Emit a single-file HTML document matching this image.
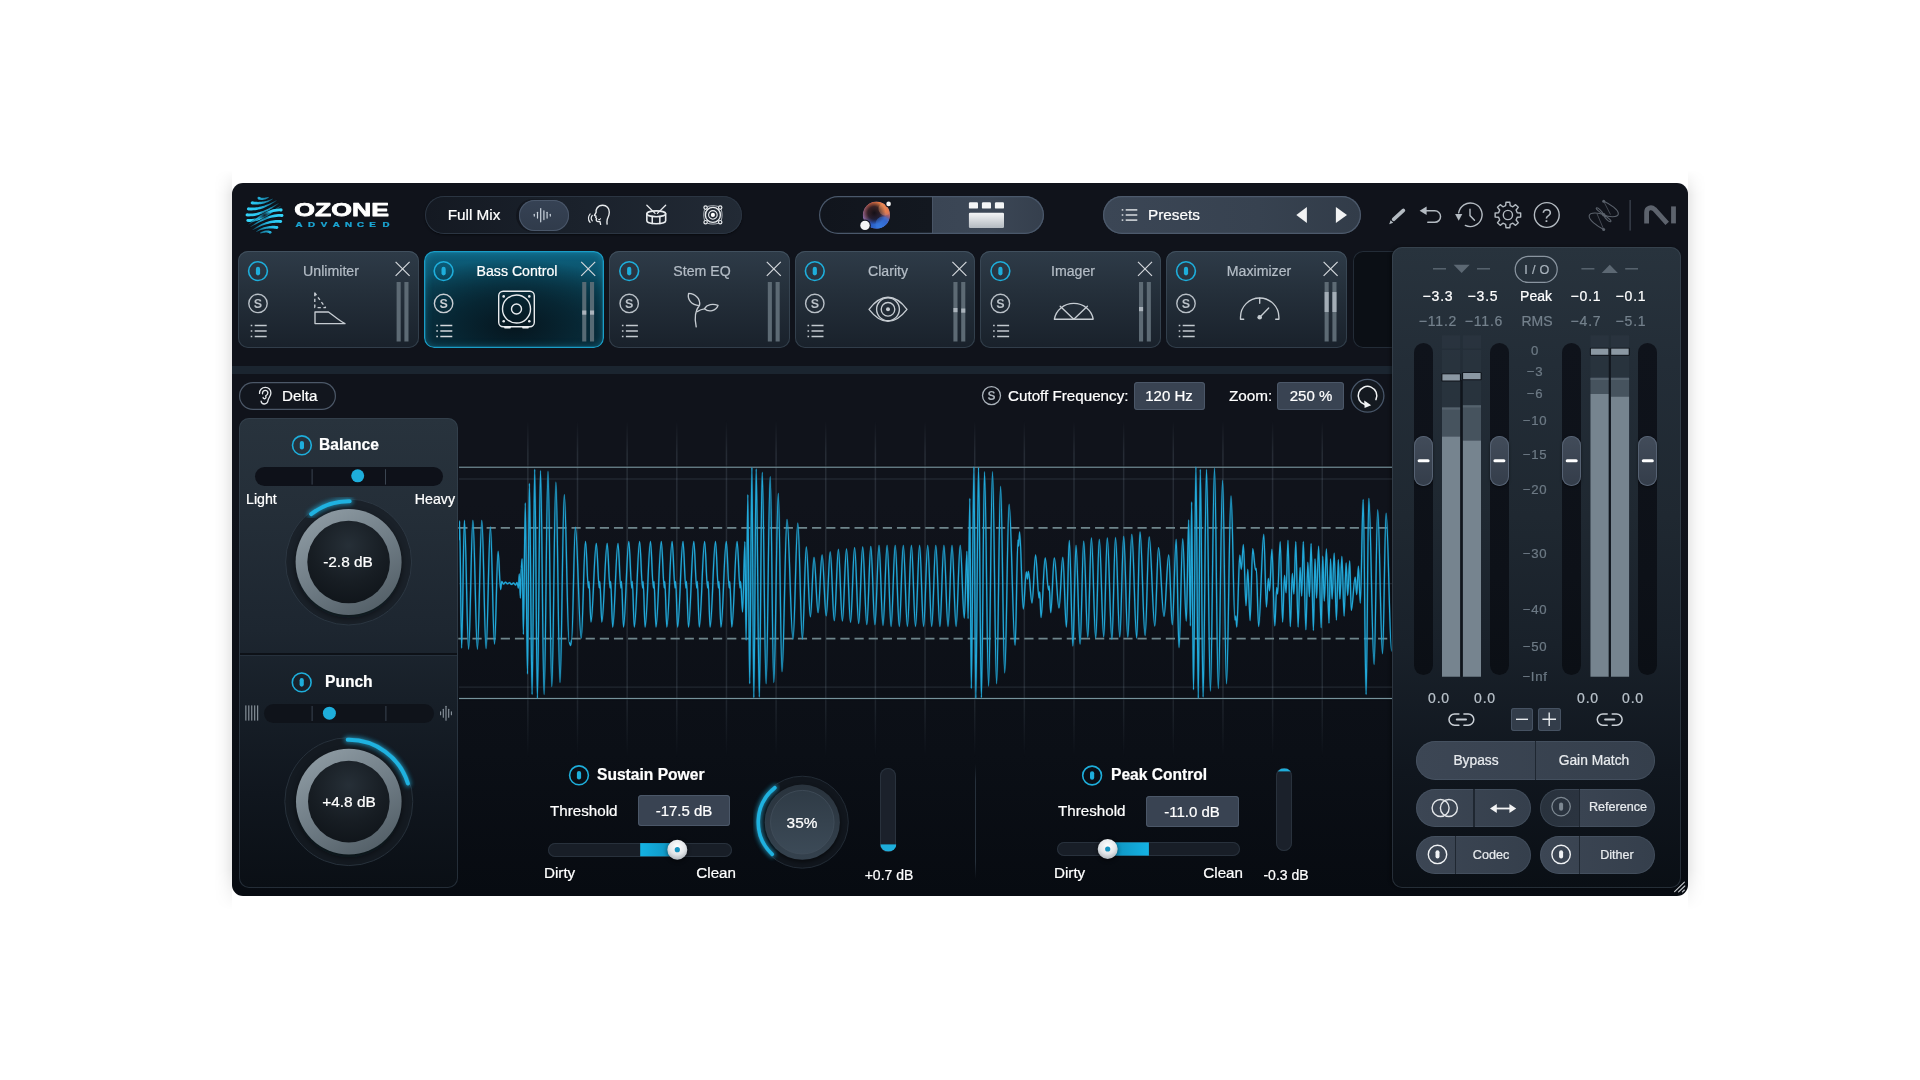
<!DOCTYPE html>
<html lang="en"><head><meta charset="utf-8"><title>Ozone Advanced - Bass Control</title>
<style>
html,body{margin:0;padding:0;background:#fff;}
body{width:1920px;height:1080px;position:relative;overflow:hidden;font-family:"Liberation Sans",Arial,sans-serif;}
.a{position:absolute;box-sizing:border-box;}
.t{-webkit-text-stroke:0.22px;will-change:transform;position:absolute;white-space:nowrap;line-height:1;}
svg.ov{opacity:.999;position:absolute;left:0;top:0;width:1920px;height:1080px;font-family:"Liberation Sans",Arial,sans-serif;}

</style></head><body>
<div class="a win" style="left:232px;top:183px;width:1456px;height:713px;background:linear-gradient(to bottom,#10131b 0%,#10131b 45%,#0b0f16 80%,#070b11 100%);border-radius:11px;"></div>
<div class="a " style="left:214px;top:170px;width:18px;height:740px;background:linear-gradient(to right,rgba(0,0,0,0) 0%,rgba(0,0,0,0.025) 50%,rgba(0,0,0,0.085) 100%);-webkit-mask-image:linear-gradient(to bottom,transparent 0,#000 25px,#000 700px,transparent 740px);"></div>
<div class="a " style="left:1688px;top:170px;width:18px;height:740px;background:linear-gradient(to left,rgba(0,0,0,0) 0%,rgba(0,0,0,0.025) 50%,rgba(0,0,0,0.085) 100%);-webkit-mask-image:linear-gradient(to bottom,transparent 0,#000 25px,#000 700px,transparent 740px);"></div>
<div class="a " style="left:425px;top:196px;width:317px;height:38px;border-radius:19px;background:linear-gradient(to right,#141922 0%,#1a212b 45%,#222a35 100%);box-shadow:inset 0 0 0 1px #2b3542, 0 1px 2px rgba(0,0,0,.5);"></div>
<div class="a " style="left:515.5px;top:198.5px;width:40px;height:33px;border-radius:17px 0 0 17px;background:linear-gradient(to right,#11151d,rgba(17,21,29,0));"></div>
<div class="a " style="left:518.5px;top:200px;width:50px;height:31px;border-radius:16px;background:linear-gradient(to bottom,#364254,#303b4b);box-shadow:inset 0 0 0 1px #4a576a;"></div>
<div class="a " style="left:819px;top:195.8px;width:225.2px;height:38.4px;border-radius:19.2px;background:linear-gradient(to right,#11151d 0,#131820 50.3%,#3a4554 50.3%,#3c4756 75%,#353f4d 100%);box-shadow:inset 0 0 0 1.2px #4a586b;"></div>
<div class="a " style="left:932px;top:197px;width:1.4px;height:36px;background:#55637680;"></div>
<div class="a " style="left:1103px;top:196px;width:258.2px;height:38.4px;border-radius:19.2px;background:linear-gradient(to right,#3b4655 0,#374250 60%,#323c49 100%);box-shadow:inset 0 0 0 1.2px #4d5a6c;"></div>
<div class="a " style="left:238.0px;top:251px;width:180.6px;height:97px;border-radius:10px;background:linear-gradient(to bottom,#2e3b48 0%,#25303b 40%,#19212b 100%);box-shadow:inset 0 0 0 1px rgba(70,85,100,.55), inset 0 1px 0 rgba(90,105,120,.35);"></div>
<div class="a " style="left:423.6px;top:251px;width:180.6px;height:97px;border-radius:10px;background:radial-gradient(ellipse 75% 70% at 50% 78%,#06161f 0%,#072633 45%,rgba(8,52,70,0) 100%),linear-gradient(to bottom,#0d6381 0%,#0a475c 38%,#082f3e 100%);box-shadow:inset 0 0 0 1.3px #1a9dc6, inset 0 0 9px rgba(40,180,225,.45);"></div>
<div class="a " style="left:609.2px;top:251px;width:180.6px;height:97px;border-radius:10px;background:linear-gradient(to bottom,#2e3b48 0%,#25303b 40%,#19212b 100%);box-shadow:inset 0 0 0 1px rgba(70,85,100,.55), inset 0 1px 0 rgba(90,105,120,.35);"></div>
<div class="a " style="left:794.8px;top:251px;width:180.6px;height:97px;border-radius:10px;background:linear-gradient(to bottom,#2e3b48 0%,#25303b 40%,#19212b 100%);box-shadow:inset 0 0 0 1px rgba(70,85,100,.55), inset 0 1px 0 rgba(90,105,120,.35);"></div>
<div class="a " style="left:980.4px;top:251px;width:180.6px;height:97px;border-radius:10px;background:linear-gradient(to bottom,#2e3b48 0%,#25303b 40%,#19212b 100%);box-shadow:inset 0 0 0 1px rgba(70,85,100,.55), inset 0 1px 0 rgba(90,105,120,.35);"></div>
<div class="a " style="left:1166.0px;top:251px;width:180.6px;height:97px;border-radius:10px;background:linear-gradient(to bottom,#2e3b48 0%,#25303b 40%,#19212b 100%);box-shadow:inset 0 0 0 1px rgba(70,85,100,.55), inset 0 1px 0 rgba(90,105,120,.35);"></div>
<div class="a " style="left:1352.5px;top:251px;width:60px;height:97px;border-radius:10px;background:#0b0f15;box-shadow:inset 0 0 0 1px #232c37;"></div>
<div class="a " style="left:232px;top:366px;width:1160px;height:7.5px;background:#1b2530;"></div>
<div class="a " style="left:239.2px;top:381.7px;width:96.7px;height:28.1px;border-radius:14px;background:#12161e;box-shadow:inset 0 0 0 1.2px #4c5868;"></div>
<div class="a " style="left:239.3px;top:417.6px;width:219px;height:470px;border-radius:10px;background:linear-gradient(to bottom,#28333d 0%,#242e38 20%,#1d2630 45%,#171f28 60%,#10161e 80%,#0a0f15 100%);box-shadow:inset 0 0 0 1px rgba(62,76,90,.5);"></div>
<div class="a " style="left:240.3px;top:652.6px;width:217px;height:2.2px;background:#0d1117;"></div>
<div class="a " style="left:240.3px;top:654.8px;width:217px;height:1px;background:rgba(60,74,88,.35);"></div>
<div class="a " style="left:254.9px;top:466.6px;width:188.2px;height:19.3px;border-radius:9.7px;background:#0e1119;"></div>
<div class="a " style="left:264px;top:703.8px;width:170px;height:19px;border-radius:9.5px;background:#0f131a;"></div>
<div class="a " style="left:1134px;top:382px;width:70.7px;height:27.6px;border-radius:3.5px;background:#394352;box-shadow:inset 0 0 0 1px #4b5768;"></div>
<div class="a " style="left:1277px;top:382px;width:67.2px;height:27.6px;border-radius:3.5px;background:#394352;box-shadow:inset 0 0 0 1px #4b5768;"></div>
<div class="a " style="left:637.8px;top:794.6px;width:92.7px;height:31.6px;border-radius:3.5px;background:#394352;box-shadow:inset 0 0 0 1px #4b5768;"></div>
<div class="a " style="left:547.9px;top:842.5px;width:184.5px;height:14.4px;border-radius:7.2px;background:#181e27;box-shadow:inset 0 0 0 1px #28313c;"></div>
<div class="a " style="left:880.2px;top:768.3px;width:16.3px;height:83.30000000000007px;border-radius:8.1px;background:#1b212b;box-shadow:inset 0 0 0 1px #29323d;overflow:hidden;"></div>
<div class="a " style="left:974.6px;top:764px;width:1.3px;height:115px;background:linear-gradient(to bottom,rgba(38,48,59,0),#26303b 15%,#26303b 85%,rgba(38,48,59,0));"></div>
<div class="a " style="left:1145.6px;top:795.6px;width:93.2px;height:31.8px;border-radius:3.5px;background:#394352;box-shadow:inset 0 0 0 1px #4b5768;"></div>
<div class="a " style="left:1056.9px;top:841.8px;width:183.29999999999995px;height:14.4px;border-radius:7.2px;background:#181e27;box-shadow:inset 0 0 0 1px #28313c;"></div>
<div class="a " style="left:1276.1px;top:768.3px;width:16.3px;height:82.5px;border-radius:8.1px;background:#1b212b;box-shadow:inset 0 0 0 1px #29323d;overflow:hidden;"></div>
<div class="a " style="left:1392px;top:247.3px;width:289px;height:640.5px;border-radius:10px;background:linear-gradient(to bottom,#28333d 0%,#232d37 18%,#1f2831 42%,#19212a 62%,#10161e 82%,#0a0f15 100%);box-shadow:inset 0 0 0 1px rgba(70,84,98,.45), -2px 0 3px rgba(0,0,0,.35);"></div>
<div class="a " style="left:1414.2px;top:343px;width:18.8px;height:332.4px;border-radius:9.4px;background:linear-gradient(to bottom,#0f131b,#0d1118 70%,#0b0f15);"></div>
<div class="a " style="left:1490px;top:343px;width:18.8px;height:332.4px;border-radius:9.4px;background:linear-gradient(to bottom,#0f131b,#0d1118 70%,#0b0f15);"></div>
<div class="a " style="left:1562.3px;top:343px;width:18.8px;height:332.4px;border-radius:9.4px;background:linear-gradient(to bottom,#0f131b,#0d1118 70%,#0b0f15);"></div>
<div class="a " style="left:1638.4px;top:343px;width:18.8px;height:332.4px;border-radius:9.4px;background:linear-gradient(to bottom,#0f131b,#0d1118 70%,#0b0f15);"></div>
<div class="a " style="left:1414.2px;top:435.5px;width:18.8px;height:50.2px;border-radius:9.4px;background:linear-gradient(to bottom,#424c5a,#343d4a);box-shadow:inset 0 0 0 1px #566273, 0 1px 3px rgba(0,0,0,.5);"></div>
<div class="a " style="left:1490px;top:435.5px;width:18.8px;height:50.2px;border-radius:9.4px;background:linear-gradient(to bottom,#424c5a,#343d4a);box-shadow:inset 0 0 0 1px #566273, 0 1px 3px rgba(0,0,0,.5);"></div>
<div class="a " style="left:1562.3px;top:435.5px;width:18.8px;height:50.2px;border-radius:9.4px;background:linear-gradient(to bottom,#424c5a,#343d4a);box-shadow:inset 0 0 0 1px #566273, 0 1px 3px rgba(0,0,0,.5);"></div>
<div class="a " style="left:1638.4px;top:435.5px;width:18.8px;height:50.2px;border-radius:9.4px;background:linear-gradient(to bottom,#424c5a,#343d4a);box-shadow:inset 0 0 0 1px #566273, 0 1px 3px rgba(0,0,0,.5);"></div>
<div class="a " style="left:1510.6px;top:707.8px;width:22.8px;height:23px;border-radius:3px;background:#333d4a;box-shadow:inset 0 0 0 1px #465262;"></div>
<div class="a " style="left:1537.8px;top:707.8px;width:22.8px;height:23px;border-radius:3px;background:#333d4a;box-shadow:inset 0 0 0 1px #465262;"></div>
<div class="a " style="left:1416px;top:741.4px;width:239px;height:38.6px;border-radius:19.3px;background:linear-gradient(to right,#3c4654,#353f4c);box-shadow:inset 0 0 0 1px rgba(90,104,120,.35);"></div>
<div class="a " style="left:1534.8px;top:741.4px;width:1.6px;height:38.6px;background:#1f2731;"></div>
<div class="a " style="left:1416px;top:788.6px;width:115.4px;height:38.6px;border-radius:19.3px;background:linear-gradient(to right,#3c4654,#353f4c);box-shadow:inset 0 0 0 1px rgba(90,104,120,.35);"></div>
<div class="a " style="left:1473.2px;top:788.6px;width:1.6px;height:38.6px;background:#1f2731;"></div>
<div class="a " style="left:1540.3px;top:788.6px;width:114.7px;height:38.6px;border-radius:19.3px;background:linear-gradient(to right,#29323d 0,#2b3440 33.8%,#3a4452 33.8%,#353f4c 100%);box-shadow:inset 0 0 0 1px rgba(90,104,120,.35);"></div>
<div class="a " style="left:1578.5px;top:788.6px;width:1.6px;height:38.6px;background:#1f2731;"></div>
<div class="a " style="left:1416px;top:835.5px;width:115.4px;height:38.5px;border-radius:19.3px;background:linear-gradient(to right,#3c4654,#353f4c);box-shadow:inset 0 0 0 1px rgba(90,104,120,.35);"></div>
<div class="a " style="left:1454.8px;top:835.5px;width:1.6px;height:38.5px;background:#1f2731;"></div>
<div class="a " style="left:1540.3px;top:835.5px;width:114.7px;height:38.5px;border-radius:19.3px;background:linear-gradient(to right,#3c4654,#353f4c);box-shadow:inset 0 0 0 1px rgba(90,104,120,.35);"></div>
<div class="a " style="left:1578.5px;top:835.5px;width:1.6px;height:38.5px;background:#1f2731;"></div>
<svg class="ov" viewBox="0 0 1920 1080">
<defs><linearGradient id="lgA" gradientUnits="userSpaceOnUse" x1="-17" y1="4" x2="15" y2="-15"><stop offset="0" stop-color="#35d6fa"/><stop offset="0.42" stop-color="#27c0ec"/><stop offset="0.7" stop-color="#1fa8d3" stop-opacity="0.8"/><stop offset="1" stop-color="#1d9fc9" stop-opacity="0.15"/></linearGradient><linearGradient id="lgB" gradientUnits="userSpaceOnUse" x1="17" y1="-4" x2="-15" y2="15"><stop offset="0" stop-color="#35d6fa"/><stop offset="0.42" stop-color="#27c0ec"/><stop offset="0.7" stop-color="#1fa8d3" stop-opacity="0.8"/><stop offset="1" stop-color="#1d9fc9" stop-opacity="0.15"/></linearGradient><radialGradient id="lgf" cx="0.5" cy="0.5" r="0.5"><stop offset="0" stop-color="#10131b" stop-opacity="0.9"/><stop offset="0.5" stop-color="#10131b" stop-opacity="0.45"/><stop offset="1" stop-color="#10131b" stop-opacity="0"/></radialGradient></defs>
<g transform="translate(264.5,215.2)"><g fill="url(#lgA)" stroke="#04060a" stroke-width="0.45" stroke-opacity="0.8" paint-order="stroke"><path d="M-6.34,-15.92 L-5.65,-15.68 L-4.97,-15.49 L-4.30,-15.37 L-3.63,-15.29 L-2.97,-15.26 L-2.33,-15.27 L-1.70,-15.32 L-1.08,-15.40 L-0.47,-15.52 L0.12,-15.66 L0.70,-15.82 L1.27,-16.01 L1.82,-16.21 L2.36,-16.42 L2.89,-16.65 L3.41,-16.88 L3.92,-17.12 L4.42,-17.36 L3.98,-18.44 L3.47,-18.28 L2.95,-18.13 L2.42,-17.98 L1.89,-17.84 L1.36,-17.71 L0.83,-17.60 L0.30,-17.50 L-0.22,-17.43 L-0.75,-17.38 L-1.27,-17.36 L-1.79,-17.36 L-2.30,-17.39 L-2.81,-17.45 L-3.31,-17.55 L-3.80,-17.68 L-4.29,-17.84 L-4.78,-18.04 L-5.26,-18.28Z"/><circle cx="-5.60" cy="-17.10" r="1.42" stroke="none"/><path d="M-12.77,-10.86 L-11.46,-10.74 L-10.16,-10.67 L-8.88,-10.64 L-7.62,-10.66 L-6.37,-10.73 L-5.13,-10.84 L-3.91,-11.01 L-2.71,-11.22 L-1.52,-11.49 L-0.35,-11.80 L0.81,-12.16 L1.95,-12.58 L3.08,-13.05 L4.19,-13.57 L5.29,-14.14 L6.37,-14.77 L7.44,-15.45 L8.50,-16.18 L8.10,-16.82 L6.98,-16.25 L5.86,-15.74 L4.75,-15.29 L3.64,-14.88 L2.53,-14.53 L1.42,-14.23 L0.31,-13.97 L-0.80,-13.76 L-1.92,-13.59 L-3.04,-13.46 L-4.17,-13.37 L-5.31,-13.33 L-6.46,-13.31 L-7.62,-13.34 L-8.80,-13.39 L-9.99,-13.48 L-11.20,-13.60 L-12.43,-13.74Z"/><circle cx="-12.40" cy="-12.30" r="1.42" stroke="none"/><path d="M-16.52,-4.86 L-14.69,-4.76 L-12.89,-4.76 L-11.13,-4.85 L-9.40,-5.03 L-7.70,-5.28 L-6.04,-5.62 L-4.40,-6.03 L-2.79,-6.52 L-1.21,-7.07 L0.34,-7.68 L1.88,-8.35 L3.40,-9.08 L4.90,-9.87 L6.39,-10.70 L7.88,-11.58 L9.35,-12.51 L10.83,-13.47 L12.30,-14.48 L11.90,-15.12 L10.35,-14.27 L8.80,-13.46 L7.27,-12.69 L5.74,-11.97 L4.21,-11.29 L2.69,-10.66 L1.17,-10.09 L-0.35,-9.57 L-1.88,-9.10 L-3.42,-8.69 L-4.96,-8.35 L-6.51,-8.06 L-8.08,-7.84 L-9.67,-7.69 L-11.28,-7.60 L-12.92,-7.58 L-14.58,-7.63 L-16.28,-7.74Z"/><circle cx="-16.20" cy="-6.30" r="1.42" stroke="none"/><path d="M-17.81,1.15 L-15.71,1.22 L-13.67,1.16 L-11.67,0.98 L-9.73,0.68 L-7.83,0.27 L-5.98,-0.24 L-4.17,-0.85 L-2.39,-1.54 L-0.65,-2.30 L1.07,-3.13 L2.76,-4.03 L4.44,-4.98 L6.10,-5.98 L7.76,-7.02 L9.41,-8.10 L11.06,-9.20 L12.73,-10.33 L14.40,-11.48 L14.00,-12.12 L12.23,-11.12 L10.49,-10.14 L8.75,-9.18 L7.04,-8.25 L5.33,-7.36 L3.62,-6.51 L1.92,-5.70 L0.22,-4.96 L-1.48,-4.27 L-3.19,-3.65 L-4.91,-3.11 L-6.64,-2.64 L-8.39,-2.26 L-10.16,-1.96 L-11.96,-1.76 L-13.80,-1.65 L-15.67,-1.65 L-17.59,-1.75Z"/><circle cx="-17.50" cy="-0.30" r="1.42" stroke="none"/><path d="M-17.00,6.65 L-14.75,6.70 L-12.57,6.57 L-10.46,6.28 L-8.42,5.83 L-6.44,5.25 L-4.52,4.54 L-2.66,3.73 L-0.84,2.81 L0.95,1.82 L2.70,0.75 L4.42,-0.37 L6.13,-1.54 L7.84,-2.75 L9.54,-3.99 L11.25,-5.24 L12.98,-6.49 L14.72,-7.74 L16.50,-8.98 L16.10,-9.62 L14.22,-8.53 L12.37,-7.41 L10.54,-6.29 L8.74,-5.17 L6.96,-4.07 L5.19,-3.00 L3.43,-1.96 L1.68,-0.98 L-0.08,-0.06 L-1.84,0.78 L-3.61,1.55 L-5.40,2.21 L-7.20,2.78 L-9.03,3.23 L-10.90,3.56 L-12.81,3.76 L-14.77,3.83 L-16.80,3.75Z"/><circle cx="-16.70" cy="5.20" r="1.42" stroke="none"/></g><g fill="url(#lgB)" stroke="#04060a" stroke-width="0.45" stroke-opacity="0.8" paint-order="stroke"><path d="M6.34,15.92 L5.65,15.68 L4.97,15.49 L4.30,15.37 L3.63,15.29 L2.97,15.26 L2.33,15.27 L1.70,15.32 L1.08,15.40 L0.47,15.52 L-0.12,15.66 L-0.70,15.82 L-1.27,16.01 L-1.82,16.21 L-2.36,16.42 L-2.89,16.65 L-3.41,16.88 L-3.92,17.12 L-4.42,17.36 L-3.98,18.44 L-3.47,18.28 L-2.95,18.13 L-2.42,17.98 L-1.89,17.84 L-1.36,17.71 L-0.83,17.60 L-0.30,17.50 L0.22,17.43 L0.75,17.38 L1.27,17.36 L1.79,17.36 L2.30,17.39 L2.81,17.45 L3.31,17.55 L3.80,17.68 L4.29,17.84 L4.78,18.04 L5.26,18.28Z"/><circle cx="5.60" cy="17.10" r="1.42" stroke="none"/><path d="M12.77,10.86 L11.46,10.74 L10.16,10.67 L8.88,10.64 L7.62,10.66 L6.37,10.73 L5.13,10.84 L3.91,11.01 L2.71,11.22 L1.52,11.49 L0.35,11.80 L-0.81,12.16 L-1.95,12.58 L-3.08,13.05 L-4.19,13.57 L-5.29,14.14 L-6.37,14.77 L-7.44,15.45 L-8.50,16.18 L-8.10,16.82 L-6.98,16.25 L-5.86,15.74 L-4.75,15.29 L-3.64,14.88 L-2.53,14.53 L-1.42,14.23 L-0.31,13.97 L0.80,13.76 L1.92,13.59 L3.04,13.46 L4.17,13.37 L5.31,13.33 L6.46,13.31 L7.62,13.34 L8.80,13.39 L9.99,13.48 L11.20,13.60 L12.43,13.74Z"/><circle cx="12.40" cy="12.30" r="1.42" stroke="none"/><path d="M16.52,4.86 L14.69,4.76 L12.89,4.76 L11.13,4.85 L9.40,5.03 L7.70,5.28 L6.04,5.62 L4.40,6.03 L2.79,6.52 L1.21,7.07 L-0.34,7.68 L-1.88,8.35 L-3.40,9.08 L-4.90,9.87 L-6.39,10.70 L-7.88,11.58 L-9.35,12.51 L-10.83,13.47 L-12.30,14.48 L-11.90,15.12 L-10.35,14.27 L-8.80,13.46 L-7.27,12.69 L-5.74,11.97 L-4.21,11.29 L-2.69,10.66 L-1.17,10.09 L0.35,9.57 L1.88,9.10 L3.42,8.69 L4.96,8.35 L6.51,8.06 L8.08,7.84 L9.67,7.69 L11.28,7.60 L12.92,7.58 L14.58,7.63 L16.28,7.74Z"/><circle cx="16.20" cy="6.30" r="1.42" stroke="none"/><path d="M17.81,-1.15 L15.71,-1.22 L13.67,-1.16 L11.67,-0.98 L9.73,-0.68 L7.83,-0.27 L5.98,0.24 L4.17,0.85 L2.39,1.54 L0.65,2.30 L-1.07,3.13 L-2.76,4.03 L-4.44,4.98 L-6.10,5.98 L-7.76,7.02 L-9.41,8.10 L-11.06,9.20 L-12.73,10.33 L-14.40,11.48 L-14.00,12.12 L-12.23,11.12 L-10.49,10.14 L-8.75,9.18 L-7.04,8.25 L-5.33,7.36 L-3.62,6.51 L-1.92,5.70 L-0.22,4.96 L1.48,4.27 L3.19,3.65 L4.91,3.11 L6.64,2.64 L8.39,2.26 L10.16,1.96 L11.96,1.76 L13.80,1.65 L15.67,1.65 L17.59,1.75Z"/><circle cx="17.50" cy="0.30" r="1.42" stroke="none"/><path d="M17.00,-6.65 L14.75,-6.70 L12.57,-6.57 L10.46,-6.28 L8.42,-5.83 L6.44,-5.25 L4.52,-4.54 L2.66,-3.73 L0.84,-2.81 L-0.95,-1.82 L-2.70,-0.75 L-4.42,0.37 L-6.13,1.54 L-7.84,2.75 L-9.54,3.99 L-11.25,5.24 L-12.98,6.49 L-14.72,7.74 L-16.50,8.98 L-16.10,9.62 L-14.22,8.53 L-12.37,7.41 L-10.54,6.29 L-8.74,5.17 L-6.96,4.07 L-5.19,3.00 L-3.43,1.96 L-1.68,0.98 L0.08,0.06 L1.84,-0.78 L3.61,-1.55 L5.40,-2.21 L7.20,-2.78 L9.03,-3.23 L10.90,-3.56 L12.81,-3.76 L14.77,-3.83 L16.80,-3.75Z"/><circle cx="16.70" cy="-5.20" r="1.42" stroke="none"/></g><ellipse cx="0" cy="0" rx="6.5" ry="5" transform="rotate(-30)" fill="url(#lgf)"/></g>
<text x="294.3" y="216.3" font-size="18.4" font-weight="700" fill="#fff" stroke="#fff" stroke-width="0.75" stroke-linejoin="round" textLength="94.6" lengthAdjust="spacingAndGlyphs">OZONE</text>
<text transform="scale(1.55,1)" x="190.69 198.69 206.93 214.69 222.63 230.31 238.22 246.76" y="227" font-size="6.3" font-weight="700" fill="#1ba8d6" stroke="#1ba8d6" stroke-width="0.25">ADVANCED</text>
<rect x="533.70" y="213.70" width="1.2" height="3" rx="0.6" fill="#c9d2dc"/>
<rect x="536.90" y="211.70" width="1.2" height="7" rx="0.6" fill="#c9d2dc"/>
<rect x="540.10" y="207.95" width="1.2" height="14.5" rx="0.6" fill="#c9d2dc"/>
<rect x="543.30" y="210.20" width="1.2" height="10" rx="0.6" fill="#c9d2dc"/>
<rect x="546.50" y="211.70" width="1.2" height="7" rx="0.6" fill="#c9d2dc"/>
<rect x="549.70" y="213.70" width="1.2" height="3" rx="0.6" fill="#c9d2dc"/>
<g transform="translate(599.3,215.4)" fill="none" stroke="#e9ecef" stroke-width="1.35" stroke-linecap="round" stroke-linejoin="round"><path d="M1.3,9 L0.6,6 C-1.4,6.5 -3,6 -3.1,4.6 L-2.7,3 L-3.6,2.2 L-3.3,0.7 L-4.9,-0.1 L-3.2,-3 C-3.4,-4.6 -3.2,-6 -2.2,-7.4 C-0.8,-9.4 1.4,-10.1 3.4,-10.1 C7.4,-10.1 10,-7 10,-3.2 C10,0.4 8.3,2.2 7.9,4.2 C7.6,5.8 7.6,7.4 7.8,8.7"/><path d="M-0.6,4.2 C0.2,4.4 0.8,4 1.2,3.4" stroke-width="1.1"/><path d="M-7,0 C-8.3,1.7 -8.3,3.9 -7,5.5" stroke-width="1.2"/><path d="M-9.2,-1.4 C-11.2,1.2 -11.2,4.6 -9.2,7" stroke-width="1.2"/></g>
<g transform="translate(656.25,215)" fill="none" stroke="#e9ecef" stroke-width="1.6" stroke-linecap="round" stroke-linejoin="round"><ellipse cx="0" cy="-1.2" rx="9.4" ry="2.9"/><path d="M-9.4,-1.2 V5.8 C-9.4,7.6 -5,8.8 0,8.8 S9.4,7.6 9.4,5.8 V-1.2"/><path d="M-4,1.6 V8.4 M3.6,1.6 V8.4" stroke-width="1.5"/><path d="M-9.4,-9.8 L-1.2,-1.6 M9.4,-9.8 L1.2,-1.6" stroke-width="1.3"/></g>
<g transform="translate(712.9,214.9)" fill="none" stroke="#e9ecef" stroke-width="1.4" stroke-linejoin="round"><circle r="7.5"/><circle r="4.3" stroke-width="1.1"/><circle r="2.1" fill="#fff" stroke="none"/><path d="M-5.4,-8.4 C-2,-9.4 2,-9.4 5.4,-8.4 M-5.4,8.4 C-2,9.4 2,9.4 5.4,8.4 M-8.4,-5.4 C-9.4,-2 -9.4,2 -8.4,5.4 M8.4,-5.4 C9.4,-2 9.4,2 8.4,5.4" stroke-width="0.9" opacity="0.8"/><circle cx="-7.3" cy="-7.3" r="1.7" stroke-width="1.2"/><circle cx="7.3" cy="-7.3" r="1.7" stroke-width="1.2"/><circle cx="-7.3" cy="7.3" r="1.7" stroke-width="1.2"/><circle cx="7.3" cy="7.3" r="1.7" stroke-width="1.2"/></g>
<defs>
<radialGradient id="orbA" cx="0.62" cy="0.2" r="0.75"><stop offset="0" stop-color="#f08a4a"/><stop offset="0.45" stop-color="#d9653f"/><stop offset="1" stop-color="#d9653f" stop-opacity="0"/></radialGradient>
<radialGradient id="orbB" cx="0.6" cy="0.95" r="0.6"><stop offset="0" stop-color="#2f7be0"/><stop offset="0.55" stop-color="#2b58c0"/><stop offset="1" stop-color="#2b58c0" stop-opacity="0"/></radialGradient>
<radialGradient id="orbC" cx="0.42" cy="0.42" r="0.42"><stop offset="0" stop-color="#141018"/><stop offset="0.55" stop-color="#1b1420" stop-opacity="0.85"/><stop offset="1" stop-color="#1b1420" stop-opacity="0"/></radialGradient>
<linearGradient id="gr1" x1="0" y1="0" x2="0" y2="1"><stop offset="0" stop-color="#f4f5f6"/><stop offset="1" stop-color="#b3bac1"/></linearGradient>
<clipPath id="orbclip"><circle cx="876.4" cy="215.1" r="13.7"/></clipPath>
</defs>
<g clip-path="url(#orbclip)"><circle cx="876.4" cy="215.1" r="13.7" fill="#7a63a8"/><circle cx="876.4" cy="215.1" r="13.7" fill="url(#orbA)"/><circle cx="876.4" cy="215.1" r="13.7" fill="url(#orbB)"/><circle cx="876.4" cy="215.1" r="13.7" fill="url(#orbC)"/><circle cx="885" cy="209" r="6.5" fill="#f3a070" opacity="0.35"/><circle cx="883" cy="224" r="7.5" fill="#3d7be0" opacity="0.45"/></g>
<circle cx="888.6" cy="203.9" r="3.3" fill="#12161e"/><circle cx="888.6" cy="203.9" r="2.3" fill="#f2f2f2"/>
<circle cx="865" cy="225.4" r="5.8" fill="#12161e"/><circle cx="865" cy="225.4" r="4.7" fill="#f4f4f4"/>
<rect x="968.9" y="202.3" width="9.1" height="6.3" rx="1.2" fill="#f4f5f6"/>
<rect x="981.9" y="202.3" width="9.1" height="6.3" rx="1.2" fill="#f4f5f6"/>
<rect x="994.9" y="202.3" width="9.1" height="6.3" rx="1.2" fill="#f4f5f6"/>
<rect x="968.9" y="212.7" width="35.1" height="15.3" rx="1.2" fill="url(#gr1)"/>
<rect x="1121.7" y="209.20000000000002" width="1.6" height="1.4" fill="#e3e6e9"/>
<rect x="1125.7" y="209.20000000000002" width="11.6" height="1.4" fill="#e3e6e9"/>
<rect x="1121.7" y="214.3" width="1.6" height="1.4" fill="#e3e6e9"/>
<rect x="1125.7" y="214.3" width="11.6" height="1.4" fill="#e3e6e9"/>
<rect x="1121.7" y="219.4" width="1.6" height="1.4" fill="#e3e6e9"/>
<rect x="1125.7" y="219.4" width="11.6" height="1.4" fill="#e3e6e9"/>
<path d="M1296.3,215 L1306.9,207 V223 Z" fill="#f2f3f4"/><path d="M1347,215 L1335.9,207 V223 Z" fill="#f2f3f4"/>
<g><path d="M1393.6,219.4 L1403.4,210.4" stroke="#b4bbc2" stroke-width="3.6" stroke-linecap="round" fill="none"/><path d="M1389.2,224.3 L1390.6,220.2 L1393.2,222.8 Z" fill="#b4bbc2"/></g>
<g fill="none" stroke="#b4bbc2" stroke-width="1.5" stroke-linecap="round"><path d="M1425,210.8 H1434.8 A5.75,5.75 0 0 1 1434.8,222.3 H1427.8"/></g><path d="M1419.6,210.8 L1426.6,206.6 V215 Z" fill="#b4bbc2"/>
<g fill="none" stroke="#b4bbc2" stroke-width="1.4" stroke-linecap="round"><path d="M1458.68,212.75 A11.8,11.8 0 1 1 1465.31,225.49"/><path d="M1470.0,209.20000000000002 V215.60000000000002 L1474.5,220.20000000000002"/></g><path d="M1455.1,214.0 H1462.3 L1458.7,220.8 Z" fill="#b4bbc2"/>
<path d="M1505.62,205.68 L1505.97,202.24 L1509.83,202.24 L1510.18,205.68 L1512.88,206.79 L1515.56,204.62 L1518.28,207.34 L1516.11,210.02 L1517.22,212.72 L1520.66,213.07 L1520.66,216.93 L1517.22,217.28 L1516.11,219.98 L1518.28,222.66 L1515.56,225.38 L1512.88,223.21 L1510.18,224.32 L1509.83,227.76 L1505.97,227.76 L1505.62,224.32 L1502.92,223.21 L1500.24,225.38 L1497.52,222.66 L1499.69,219.98 L1498.58,217.28 L1495.14,216.93 L1495.14,213.07 L1498.58,212.72 L1499.69,210.02 L1497.52,207.34 L1500.24,204.62 L1502.92,206.79Z" fill="none" stroke="#b4bbc2" stroke-width="1.4" stroke-linejoin="round"/><circle cx="1507.9" cy="215" r="4.6" fill="none" stroke="#b4bbc2" stroke-width="1.4"/>
<circle cx="1546.8" cy="215" r="12.4" fill="none" stroke="#b4bbc2" stroke-width="1.4"/>
<text x="1546.8" y="221.6" font-size="18" text-anchor="middle" fill="#b4bbc2">?</text>
<g fill="none" stroke="#5b626c" stroke-width="1.1" stroke-linecap="round"><path d="M1603.7,201.3 C1610,204 1619,210 1618.3,214.2 C1617.6,218 1608,217 1603.7,214.8"/><path d="M1603.7,214.8 C1607,217 1612,220.5 1610.8,221.6 C1609.5,222.8 1604.5,218 1603.7,214.8"/><path d="M1603.7,214.8 C1600.4,212.6 1595.2,209 1596.4,208 C1597.6,207 1602.8,211.6 1603.7,214.8"/><path d="M1603.7,229.4 C1597,226 1588.4,220 1589.2,215.6 C1590,211.6 1599.5,212.8 1603.7,214.8"/><path d="M1603.7,201.3 L1610.3,214.2 M1603.7,229.4 L1597.2,214.2" stroke-width="0.7"/></g><circle cx="1603.7" cy="201.3" r="1.5" fill="#5b626c"/><circle cx="1603.7" cy="229.4" r="1.5" fill="#5b626c"/><circle cx="1603.7" cy="214.8" r="1.7" fill="#5b626c"/>
<rect x="1629.4" y="200" width="1.5" height="30.6" fill="#373e49"/>
<path d="M1646.6,223.4 V212.2 C1646.6,207.6 1651.4,206.6 1654.4,209.2 L1667.2,223.4" fill="none" stroke="#5d636d" stroke-width="4.8" stroke-linejoin="round"/><rect x="1671.1" y="206.4" width="4.8" height="17" fill="#5d636d"/>
<circle cx="258.0" cy="271.1" r="9.4" fill="none" stroke="#1eaedb" stroke-width="1.6"/>
<rect x="255.9" y="266.8" width="4.2" height="8.6" rx="2.1" fill="#1eaedb"/>
<circle cx="258.0" cy="303.4" r="9.2" fill="none" stroke="#b9c0c7" stroke-width="1.4"/>
<text x="258.0" y="307.9" font-size="12.5" font-weight="700" text-anchor="middle" fill="#b9c0c7">S</text>
<rect x="250.7" y="324.75" width="1.6" height="1.5" fill="#c3c9cf"/>
<rect x="254.7" y="324.75" width="12" height="1.5" fill="#c3c9cf"/>
<rect x="250.7" y="330.25" width="1.6" height="1.5" fill="#c3c9cf"/>
<rect x="254.7" y="330.25" width="12" height="1.5" fill="#c3c9cf"/>
<rect x="250.7" y="335.75" width="1.6" height="1.5" fill="#c3c9cf"/>
<rect x="254.7" y="335.75" width="12" height="1.5" fill="#c3c9cf"/>
<path d="M395.6,261.8 L409.6,275.8 M409.6,261.8 L395.6,275.8" stroke="#d3d7db" stroke-width="1.2" fill="none"/>
<rect x="396.6" y="282" width="4.1" height="59.5" fill="#5d6a74"/><rect x="404.4" y="282" width="4.1" height="59.5" fill="#5d6a74"/>
<circle cx="443.6" cy="271.1" r="9.4" fill="none" stroke="#1eaedb" stroke-width="1.6"/>
<rect x="441.5" y="266.8" width="4.2" height="8.6" rx="2.1" fill="#1eaedb"/>
<circle cx="443.6" cy="303.4" r="9.2" fill="none" stroke="#c9ced3" stroke-width="1.4"/>
<text x="443.6" y="307.9" font-size="12.5" font-weight="700" text-anchor="middle" fill="#c9ced3">S</text>
<rect x="436.3" y="324.75" width="1.6" height="1.5" fill="#d5d9dd"/>
<rect x="440.3" y="324.75" width="12" height="1.5" fill="#d5d9dd"/>
<rect x="436.3" y="330.25" width="1.6" height="1.5" fill="#d5d9dd"/>
<rect x="440.3" y="330.25" width="12" height="1.5" fill="#d5d9dd"/>
<rect x="436.3" y="335.75" width="1.6" height="1.5" fill="#d5d9dd"/>
<rect x="440.3" y="335.75" width="12" height="1.5" fill="#d5d9dd"/>
<path d="M581.2,261.8 L595.2,275.8 M595.2,261.8 L581.2,275.8" stroke="#d3d7db" stroke-width="1.2" fill="none"/>
<rect x="582.2" y="282" width="4.1" height="59.5" fill="#566a74"/><rect x="590.0" y="282" width="4.1" height="59.5" fill="#566a74"/>
<rect x="582.2" y="310.5" width="4.1" height="4.2" fill="#aab3bb"/>
<rect x="590.0" y="310.5" width="4.1" height="4.2" fill="#aab3bb"/>
<circle cx="629.2" cy="271.1" r="9.4" fill="none" stroke="#1eaedb" stroke-width="1.6"/>
<rect x="627.1" y="266.8" width="4.2" height="8.6" rx="2.1" fill="#1eaedb"/>
<circle cx="629.2" cy="303.4" r="9.2" fill="none" stroke="#b9c0c7" stroke-width="1.4"/>
<text x="629.2" y="307.9" font-size="12.5" font-weight="700" text-anchor="middle" fill="#b9c0c7">S</text>
<rect x="621.9000000000001" y="324.75" width="1.6" height="1.5" fill="#c3c9cf"/>
<rect x="625.9000000000001" y="324.75" width="12" height="1.5" fill="#c3c9cf"/>
<rect x="621.9000000000001" y="330.25" width="1.6" height="1.5" fill="#c3c9cf"/>
<rect x="625.9000000000001" y="330.25" width="12" height="1.5" fill="#c3c9cf"/>
<rect x="621.9000000000001" y="335.75" width="1.6" height="1.5" fill="#c3c9cf"/>
<rect x="625.9000000000001" y="335.75" width="12" height="1.5" fill="#c3c9cf"/>
<path d="M766.8000000000001,261.8 L780.8000000000001,275.8 M780.8000000000001,261.8 L766.8000000000001,275.8" stroke="#d3d7db" stroke-width="1.2" fill="none"/>
<rect x="767.8000000000001" y="282" width="4.1" height="59.5" fill="#5d6a74"/><rect x="775.6" y="282" width="4.1" height="59.5" fill="#5d6a74"/>
<circle cx="814.8" cy="271.1" r="9.4" fill="none" stroke="#1eaedb" stroke-width="1.6"/>
<rect x="812.6999999999999" y="266.8" width="4.2" height="8.6" rx="2.1" fill="#1eaedb"/>
<circle cx="814.8" cy="303.4" r="9.2" fill="none" stroke="#b9c0c7" stroke-width="1.4"/>
<text x="814.8" y="307.9" font-size="12.5" font-weight="700" text-anchor="middle" fill="#b9c0c7">S</text>
<rect x="807.5" y="324.75" width="1.6" height="1.5" fill="#c3c9cf"/>
<rect x="811.5" y="324.75" width="12" height="1.5" fill="#c3c9cf"/>
<rect x="807.5" y="330.25" width="1.6" height="1.5" fill="#c3c9cf"/>
<rect x="811.5" y="330.25" width="12" height="1.5" fill="#c3c9cf"/>
<rect x="807.5" y="335.75" width="1.6" height="1.5" fill="#c3c9cf"/>
<rect x="811.5" y="335.75" width="12" height="1.5" fill="#c3c9cf"/>
<path d="M952.4,261.8 L966.4,275.8 M966.4,261.8 L952.4,275.8" stroke="#d3d7db" stroke-width="1.2" fill="none"/>
<rect x="953.4" y="282" width="4.1" height="59.5" fill="#5d6a74"/><rect x="961.1999999999999" y="282" width="4.1" height="59.5" fill="#5d6a74"/>
<rect x="953.4" y="308" width="4.1" height="4.2" fill="#aab3bb"/>
<rect x="961.1999999999999" y="308.5" width="4.1" height="4.2" fill="#aab3bb"/>
<circle cx="1000.4" cy="271.1" r="9.4" fill="none" stroke="#1eaedb" stroke-width="1.6"/>
<rect x="998.3" y="266.8" width="4.2" height="8.6" rx="2.1" fill="#1eaedb"/>
<circle cx="1000.4" cy="303.4" r="9.2" fill="none" stroke="#b9c0c7" stroke-width="1.4"/>
<text x="1000.4" y="307.9" font-size="12.5" font-weight="700" text-anchor="middle" fill="#b9c0c7">S</text>
<rect x="993.1" y="324.75" width="1.6" height="1.5" fill="#c3c9cf"/>
<rect x="997.1" y="324.75" width="12" height="1.5" fill="#c3c9cf"/>
<rect x="993.1" y="330.25" width="1.6" height="1.5" fill="#c3c9cf"/>
<rect x="997.1" y="330.25" width="12" height="1.5" fill="#c3c9cf"/>
<rect x="993.1" y="335.75" width="1.6" height="1.5" fill="#c3c9cf"/>
<rect x="997.1" y="335.75" width="12" height="1.5" fill="#c3c9cf"/>
<path d="M1138.0,261.8 L1152.0,275.8 M1152.0,261.8 L1138.0,275.8" stroke="#d3d7db" stroke-width="1.2" fill="none"/>
<rect x="1139.0" y="282" width="4.1" height="59.5" fill="#5d6a74"/><rect x="1146.8" y="282" width="4.1" height="59.5" fill="#5d6a74"/>
<rect x="1139.0" y="307" width="4.1" height="4.2" fill="#aab3bb"/>
<circle cx="1186.0" cy="271.1" r="9.4" fill="none" stroke="#1eaedb" stroke-width="1.6"/>
<rect x="1183.9" y="266.8" width="4.2" height="8.6" rx="2.1" fill="#1eaedb"/>
<circle cx="1186.0" cy="303.4" r="9.2" fill="none" stroke="#b9c0c7" stroke-width="1.4"/>
<text x="1186.0" y="307.9" font-size="12.5" font-weight="700" text-anchor="middle" fill="#b9c0c7">S</text>
<rect x="1178.7" y="324.75" width="1.6" height="1.5" fill="#c3c9cf"/>
<rect x="1182.7" y="324.75" width="12" height="1.5" fill="#c3c9cf"/>
<rect x="1178.7" y="330.25" width="1.6" height="1.5" fill="#c3c9cf"/>
<rect x="1182.7" y="330.25" width="12" height="1.5" fill="#c3c9cf"/>
<rect x="1178.7" y="335.75" width="1.6" height="1.5" fill="#c3c9cf"/>
<rect x="1182.7" y="335.75" width="12" height="1.5" fill="#c3c9cf"/>
<path d="M1323.6,261.8 L1337.6,275.8 M1337.6,261.8 L1323.6,275.8" stroke="#d3d7db" stroke-width="1.2" fill="none"/>
<rect x="1324.6" y="282" width="4.1" height="59.5" fill="#5d6a74"/><rect x="1332.4" y="282" width="4.1" height="59.5" fill="#5d6a74"/>
<rect x="1324.6" y="292" width="4.1" height="20" fill="#a3adb6"/><rect x="1332.4" y="292" width="4.1" height="20" fill="#a3adb6"/>
<g fill="none" stroke="#c6ccd2" stroke-width="1.35" stroke-linecap="round" stroke-linejoin="round"><path d="M315,312 H328.5 C334,316 339,320.5 345,323.6 H315 Z"/><path d="M314.8,293 V307.6 H325.5 Z" stroke-dasharray="3.2,2.6" stroke-linecap="butt"/></g>
<g transform="translate(516.5,309)" fill="none" stroke="#e8ebee" stroke-width="1.4" stroke-linejoin="round"><rect x="-17.8" y="-17.8" width="35.6" height="35.6" rx="4.5"/><circle r="14"/><circle r="5"/><circle cx="-12.8" cy="-12.6" r="1.3" fill="#e8ebee" stroke="none"/><circle cx="12.8" cy="-12.6" r="1.3" fill="#e8ebee" stroke="none"/><circle cx="-12.8" cy="12.2" r="1.3" fill="#e8ebee" stroke="none"/><circle cx="12.8" cy="12.2" r="1.3" fill="#e8ebee" stroke="none"/><path d="M-11.5,18.6 H-6.5 M6.5,18.6 H11.5" stroke-width="1.8" stroke-linecap="round"/></g>
<g fill="none" stroke="#c6ccd2" stroke-width="1.35" stroke-linecap="round" stroke-linejoin="round"><path d="M696.2,326.8 C694.2,318 694.8,311 699.6,305 C700.4,298.6 695.5,293.8 688.6,293.4 C687.2,299.6 691.4,305.2 699.2,305.6"/><path d="M697.2,311.6 C700,309.8 702.6,309 704.4,308.8 C707,304.2 713,303.4 718,305.4 C716,310.8 709,312.6 704.4,308.8"/></g>
<g transform="translate(888,309.3)" fill="none" stroke="#c6ccd2" stroke-width="1.35" stroke-linecap="round" stroke-linejoin="round"><path d="M-19,0 C-12,-9 -6,-12 0,-12 S12,-9 19,0 C12,9 6,12 0,12 S-12,9 -19,0 Z"/><circle r="11.4"/><circle r="6.8"/><circle r="2" fill="#c6ccd2" stroke="none"/></g>
<g fill="none" stroke="#c6ccd2" stroke-width="1.35" stroke-linecap="round" stroke-linejoin="round"><path d="M1054.3999999999999,319.2 A19.6,18.4 0 0 1 1093.2,319.2 Z"/><path d="M1060.2,306.2 L1073.8,319.2 L1087.3999999999999,306.2"/></g>
<g fill="none" stroke="#c6ccd2" stroke-width="1.35" stroke-linecap="round" stroke-linejoin="round"><path d="M1243.7,319.2 H1240.5 V317.2 A19.2,19.2 0 0 1 1278.9,317.2 V319.2 H1275.7"/><path d="M1259.7,298.2 V303.2"/><path d="M1261.2,315.7 L1268.7,308.0"/><circle cx="1259.7" cy="317.2" r="2.3" fill="#c6ccd2" stroke="none"/></g>
<g transform="translate(264.9,395.6)" fill="none" stroke="#e6e9ec" stroke-width="1.3" stroke-linecap="round" stroke-linejoin="round"><path d="M-5.4,-2.2 C-5.4,-6 -2.8,-8.2 0.4,-8.2 C3.8,-8.2 6,-5.8 6,-2.6 C6,0.6 3.6,2 3.2,4.6 C2.8,7 1.4,8.4 -0.6,8.4 C-2.4,8.4 -3.6,7.2 -3.8,5.6"/><path d="M-2.4,-1.8 C-2.6,-4 -1.2,-5.2 0.4,-5.2 C2,-5.2 3,-4 3,-2.6 C3,-1.2 1.8,-0.4 0.6,0.4 C1.4,1 1.4,2.4 0.2,3 C-0.8,3.4 -1.8,2.8 -1.8,1.8"/></g>
<defs>
<linearGradient id="kring" x1="0.2" y1="0" x2="0.8" y2="1"><stop offset="0" stop-color="#8f9ca4"/><stop offset="0.5" stop-color="#707d86"/><stop offset="1" stop-color="#515d65"/></linearGradient>
<radialGradient id="kin" cx="0.5" cy="0.3" r="0.75"><stop offset="0" stop-color="#262f37"/><stop offset="0.6" stop-color="#171d23"/><stop offset="1" stop-color="#0f1419"/></radialGradient>
<filter id="glow" x="-30%" y="-30%" width="160%" height="160%"><feGaussianBlur stdDeviation="2.2"/></filter>
<filter id="kshadow" x="-30%" y="-30%" width="160%" height="160%"><feGaussianBlur stdDeviation="3"/></filter>
</defs>
<circle cx="301.9" cy="445.3" r="9.4" fill="none" stroke="#1eaedb" stroke-width="1.6"/>
<rect x="299.79999999999995" y="441.0" width="4.2" height="8.6" rx="2.1" fill="#1eaedb"/>
<rect x="311.6" y="469.2" width="1" height="15.4" fill="#3b4551"/><rect x="385" y="469.2" width="1" height="15.4" fill="#3b4551"/>
<circle cx="357.7" cy="475.8" r="6.5" fill="#1eaedb"/>
<circle cx="348.6" cy="562" r="63" fill="#1a2129" stroke="#2c3742" stroke-width="1"/>
<circle cx="348.6" cy="565" r="53" fill="#05080c" opacity="0.55" filter="url(#kshadow)"/>
<circle cx="348.6" cy="562" r="53" fill="url(#kring)"/>
<circle cx="348.6" cy="562" r="41.3" fill="url(#kin)"/>
<path d="M311.17,514.09 A60.8,60.8 0 0 1 349.66,501.21" fill="none" stroke="#21b7e6" stroke-width="7" stroke-linecap="round" opacity="0.55" filter="url(#glow)"/>
<path d="M311.17,514.09 A60.8,60.8 0 0 1 349.66,501.21" fill="none" stroke="#1fb2e0" stroke-width="4" stroke-linecap="round"/>
<circle cx="301.7" cy="682.4" r="9.4" fill="none" stroke="#1eaedb" stroke-width="1.6"/>
<rect x="299.59999999999997" y="678.1" width="4.2" height="8.6" rx="2.1" fill="#1eaedb"/>
<rect x="311.6" y="706" width="1" height="15" fill="#3b4551"/><rect x="385.4" y="706" width="1" height="15" fill="#3b4551"/>
<circle cx="329.4" cy="713.2" r="6.5" fill="#1eaedb"/>
<rect x="245.30" y="705.4" width="1.1" height="15.2" fill="#8d97a0"/>
<rect x="248.25" y="705.4" width="1.1" height="15.2" fill="#8d97a0"/>
<rect x="251.20" y="705.4" width="1.1" height="15.2" fill="#8d97a0"/>
<rect x="254.15" y="705.4" width="1.1" height="15.2" fill="#8d97a0"/>
<rect x="257.10" y="705.4" width="1.1" height="15.2" fill="#8d97a0"/>
<rect x="440.05" y="711.2" width="1.1" height="4" rx="0.5" fill="#8d97a0"/>
<rect x="442.75" y="708.7" width="1.1" height="9" rx="0.5" fill="#8d97a0"/>
<rect x="445.45" y="705.7" width="1.1" height="15" rx="0.5" fill="#8d97a0"/>
<rect x="448.15" y="708.7" width="1.1" height="9" rx="0.5" fill="#8d97a0"/>
<rect x="450.85" y="711.2" width="1.1" height="4" rx="0.5" fill="#8d97a0"/>
<circle cx="348.8" cy="801.6" r="64" fill="#141a21" stroke="#27313b" stroke-width="1"/>
<circle cx="348.8" cy="804.6" r="52.8" fill="#05080c" opacity="0.55" filter="url(#kshadow)"/>
<circle cx="348.8" cy="801.6" r="52.8" fill="url(#kring)"/>
<circle cx="348.8" cy="801.6" r="40.8" fill="url(#kin)"/>
<path d="M347.72,739.81 A61.8,61.8 0 0 1 407.90,783.53" fill="none" stroke="#21b7e6" stroke-width="7" stroke-linecap="round" opacity="0.55" filter="url(#glow)"/>
<path d="M347.72,739.81 A61.8,61.8 0 0 1 407.90,783.53" fill="none" stroke="#1fb2e0" stroke-width="4" stroke-linecap="round"/>
<circle cx="991.5" cy="395.6" r="9" fill="none" stroke="#aab2ba" stroke-width="1.3"/>
<text x="991.5" y="399.92" font-size="12" font-weight="700" text-anchor="middle" fill="#aab2ba">S</text>
<circle cx="1367.5" cy="395.8" r="16.4" fill="#141920" stroke="#485669" stroke-width="1.3"/>
<path d="M1375.93,399.63 A9.3,9.3 0 1 0 1364.78,404.59" fill="none" stroke="#f2f4f5" stroke-width="1.5" stroke-linecap="round"/><path d="M1371.2,405.2 L1364.6,408 L1364.2,400.6 Z" fill="#f2f4f5"/>
<defs><linearGradient id="vfade" x1="0" y1="0" x2="0" y2="1" gradientUnits="userSpaceOnUse"><stop offset="0" stop-color="#fff" stop-opacity="1"/></linearGradient><linearGradient id="vg" gradientUnits="userSpaceOnUse" x1="0" y1="420" x2="0" y2="758"><stop offset="0" stop-color="#8fa3b3" stop-opacity="0"/><stop offset="0.1" stop-color="#8fa3b3" stop-opacity="0.17"/><stop offset="0.8" stop-color="#8fa3b3" stop-opacity="0.17"/><stop offset="1" stop-color="#8fa3b3" stop-opacity="0"/></linearGradient></defs>
<rect x="527.10" y="420" width="1.5" height="350" fill="url(#vg)"/><rect x="576.75" y="420" width="1.5" height="350" fill="url(#vg)"/><rect x="626.40" y="420" width="1.5" height="350" fill="url(#vg)"/><rect x="676.05" y="420" width="1.5" height="350" fill="url(#vg)"/><rect x="725.70" y="420" width="1.5" height="350" fill="url(#vg)"/><rect x="775.35" y="420" width="1.5" height="350" fill="url(#vg)"/><rect x="825.00" y="420" width="1.5" height="350" fill="url(#vg)"/><rect x="874.65" y="420" width="1.5" height="350" fill="url(#vg)"/><rect x="924.30" y="420" width="1.5" height="350" fill="url(#vg)"/><rect x="973.95" y="420" width="1.5" height="350" fill="url(#vg)"/><rect x="1023.60" y="420" width="1.5" height="350" fill="url(#vg)"/><rect x="1073.25" y="420" width="1.5" height="350" fill="url(#vg)"/><rect x="1122.90" y="420" width="1.5" height="350" fill="url(#vg)"/><rect x="1172.55" y="420" width="1.5" height="350" fill="url(#vg)"/><rect x="1222.20" y="420" width="1.5" height="350" fill="url(#vg)"/><rect x="1271.85" y="420" width="1.5" height="350" fill="url(#vg)"/><rect x="1321.50" y="420" width="1.5" height="350" fill="url(#vg)"/>
<rect x="459" y="478.5" width="933" height="1" fill="#8fa3b3" opacity="0.2"/><rect x="459" y="686.6" width="933" height="1" fill="#8fa3b3" opacity="0.2"/><rect x="459" y="583.2" width="933" height="1" fill="#8fa3b3" opacity="0.2"/>
<rect x="459" y="466.5" width="933" height="1.3" fill="#76929b"/><rect x="459" y="697.9" width="933" height="1.3" fill="#76929b"/><rect x="459" y="465.5" width="933" height="1" fill="#04060a" opacity="0.5"/><rect x="459" y="699.2" width="933" height="1" fill="#04060a" opacity="0.5"/>
<path d="M458.3,527.8 H1388 M458.3,638.6 H1388" stroke="#6f868c" stroke-width="1.7" stroke-dasharray="9.2,4.95" fill="none"/>
<clipPath id="wclip"><rect x="459" y="440" width="933" height="290"/></clipPath>
<g clip-path="url(#wclip)"><path d="M459.0,540.0C459.2,540.0 459.4,521.0 459.6,521.0C460.3,521.0 460.9,648.0 461.6,648.0C462.6,648.0 463.4,520.5 464.4,520.5C465.9,520.5 467.1,649.0 468.6,649.0C470.2,649.0 471.3,520.5 472.9,520.5C474.5,520.5 475.8,649.0 477.4,649.0C479.0,649.0 480.2,520.5 481.8,520.5C483.4,520.5 484.5,648.5 486.1,648.5C487.7,648.5 488.8,527.0 490.4,527.0C491.9,527.0 493.0,644.0 494.5,644.0C495.8,644.0 496.8,551.3 498.1,551.3C499.0,551.3 499.7,589.5 500.6,589.5C501.0,589.5 501.4,581.5 501.8,581.5C502.4,581.5 502.9,584.0 503.5,584.0C504.2,584.0 504.8,582.2 505.5,582.2C506.2,582.2 506.8,583.8 507.5,583.8C508.2,583.8 508.8,582.6 509.5,582.6C510.2,582.6 510.8,584.4 511.5,584.4C512.2,584.4 512.8,583.0 513.5,583.0C514.2,583.0 514.8,585.0 515.5,585.0C516.0,585.0 516.5,582.5 517.0,582.5C517.5,582.5 517.9,588.0 518.4,588.0C518.7,588.0 519.0,574.0 519.3,574.0C519.7,574.0 520.0,598.0 520.4,598.0C520.7,598.0 520.9,568.0 521.2,568.0C521.6,568.0 521.8,559.0 522.2,559.0C522.6,559.0 523.0,634.3 523.4,634.3C524.1,634.3 524.6,503.0 525.3,503.0C526.1,503.0 526.7,674.0 527.5,674.0C528.2,674.0 528.7,483.4 529.4,483.4C530.4,483.4 531.1,694.5 532.1,694.5C533.0,694.5 533.8,469.4 534.7,469.4C535.7,469.4 536.4,698.1 537.4,698.1C538.5,698.1 539.4,470.6 540.5,470.6C541.8,470.6 542.8,694.5 544.1,694.5C545.5,694.5 546.6,471.4 548.0,471.4C549.4,471.4 550.4,686.6 551.8,686.6C553.3,686.6 554.4,482.2 555.9,482.2C557.4,482.2 558.5,682.5 560.0,682.5C561.6,682.5 562.7,494.7 564.3,494.7C566.0,494.7 567.4,642.3 569.1,642.3C569.6,642.3 570.1,645.5 570.6,645.5C571.0,645.5 571.2,640.0 571.6,640.0C573.0,640.0 574.0,527.2 575.4,527.2C577.5,527.2 579.1,638.0 581.2,638.0C582.8,638.0 583.9,541.5 585.5,541.5C586.6,541.5 587.3,588.0 588.4,588.0C588.6,588.0 588.8,581.5 589.0,581.5C589.7,581.5 590.3,622.0 591.0,622.0C592.9,622.0 594.4,543.5 596.3,543.5C597.4,543.5 598.2,588.0 599.2,588.0C599.4,588.0 599.6,581.5 599.8,581.5C600.6,581.5 601.1,622.0 601.8,622.0C603.8,622.0 605.2,543.5 607.2,543.5C608.2,543.5 609.0,588.0 610.1,588.0C610.3,588.0 610.4,581.5 610.7,581.5C611.4,581.5 611.9,627.0 612.7,627.0C614.6,627.0 616.0,543.5 618.0,543.5C619.0,543.5 619.8,588.0 620.9,588.0C621.1,588.0 621.3,581.5 621.5,581.5C622.2,581.5 622.8,627.0 623.5,627.0C625.4,627.0 626.9,541.5 628.8,541.5C629.9,541.5 630.7,588.0 631.7,588.0C631.9,588.0 632.1,581.5 632.3,581.5C633.0,581.5 633.6,627.0 634.3,627.0C636.3,627.0 637.7,541.5 639.6,541.5C640.7,541.5 641.5,588.0 642.5,588.0C642.8,588.0 642.9,581.5 643.1,581.5C643.9,581.5 644.4,627.0 645.1,627.0C647.1,627.0 648.5,541.5 650.5,541.5C651.5,541.5 652.3,588.0 653.4,588.0C653.6,588.0 653.8,581.5 654.0,581.5C654.7,581.5 655.3,627.0 656.0,627.0C657.9,627.0 659.4,541.5 661.3,541.5C662.4,541.5 663.2,588.0 664.2,588.0C664.4,588.0 664.6,581.5 664.8,581.5C665.5,581.5 666.1,627.0 666.8,627.0C668.8,627.0 670.2,541.5 672.1,541.5C673.2,541.5 674.0,588.0 675.0,588.0C675.3,588.0 675.4,581.5 675.6,581.5C676.4,581.5 676.9,627.0 677.6,627.0C679.6,627.0 681.0,541.5 683.0,541.5C684.0,541.5 684.8,588.0 685.9,588.0C686.1,588.0 686.3,581.5 686.5,581.5C687.2,581.5 687.7,627.0 688.5,627.0C690.4,627.0 691.9,541.5 693.8,541.5C694.9,541.5 695.6,588.0 696.7,588.0C696.9,588.0 697.1,581.5 697.3,581.5C698.0,581.5 698.6,627.0 699.3,627.0C701.2,627.0 702.7,541.5 704.6,541.5C705.7,541.5 706.5,588.0 707.5,588.0C707.7,588.0 707.9,581.5 708.1,581.5C708.9,581.5 709.4,627.0 710.1,627.0C712.1,627.0 713.5,541.5 715.5,541.5C716.5,541.5 717.3,588.0 718.4,588.0C718.6,588.0 718.7,581.5 719.0,581.5C719.7,581.5 720.2,627.0 721.0,627.0C722.9,627.0 724.3,541.5 726.3,541.5C727.3,541.5 728.1,588.0 729.2,588.0C729.4,588.0 729.6,581.5 729.8,581.5C730.5,581.5 731.1,627.0 731.8,627.0C733.7,627.0 735.2,541.5 737.1,541.5C738.2,541.5 739.0,588.0 740.0,588.0C740.2,588.0 740.4,581.5 740.6,581.5C741.3,581.5 741.9,612.0 742.6,612.0C743.4,612.0 744.1,541.7 744.9,541.7C745.3,541.7 745.7,640.4 746.1,640.4C746.7,640.4 747.2,494.7 747.8,494.7C748.5,494.7 749.0,683.7 749.7,683.7C750.5,683.7 751.1,467.5 751.9,467.5C752.6,467.5 753.1,697.7 753.8,697.7C754.7,697.7 755.3,469.0 756.2,469.0C757.3,469.0 758.2,697.0 759.3,697.0C760.4,697.0 761.1,472.3 762.2,472.3C763.6,472.3 764.7,683.7 766.1,683.7C767.6,683.7 768.7,476.7 770.2,476.7C771.5,476.7 772.5,682.5 773.8,682.5C775.4,682.5 776.7,493.5 778.3,493.5C779.6,493.5 780.7,671.7 782.0,671.7C783.8,671.7 785.2,519.5 787.0,519.5C789.2,519.5 790.8,639.2 793.0,639.2C794.7,639.2 796.1,523.1 797.8,523.1C799.5,523.1 800.7,639.2 802.4,639.2C803.8,639.2 804.9,547.0 806.3,547.0C807.8,547.0 808.9,616.8 810.4,616.8C811.7,616.8 812.7,557.3 814.0,557.3C815.5,557.3 816.6,612.7 818.1,612.7C819.5,612.7 820.6,555.0 822.1,555.0C823.6,555.0 824.7,615.8 826.2,615.8C827.7,615.8 828.8,551.8 830.2,551.8C831.7,551.8 832.8,620.6 834.3,620.6C835.8,620.6 836.9,549.4 838.4,549.4C839.8,549.4 840.9,621.0 842.4,621.0C843.9,621.0 845.0,549.0 846.5,549.0C848.0,549.0 849.1,622.3 850.5,622.3C852.0,622.3 853.1,547.7 854.6,547.7C856.1,547.7 857.2,623.5 858.7,623.5C860.1,623.5 861.2,547.0 862.7,547.0C864.2,547.0 865.3,624.7 866.8,624.7C868.3,624.7 869.4,546.5 870.8,546.5C872.3,546.5 873.4,624.7 874.9,624.7C876.4,624.7 877.5,545.3 879.0,545.3C880.4,545.3 881.5,625.4 883.0,625.4C884.5,625.4 885.6,545.3 887.1,545.3C888.6,545.3 889.7,626.4 891.1,626.4C892.6,626.4 893.7,545.3 895.2,545.3C896.7,545.3 897.8,626.4 899.3,626.4C900.7,626.4 901.8,545.3 903.3,545.3C904.8,545.3 905.9,626.4 907.4,626.4C908.9,626.4 910.0,545.3 911.4,545.3C912.9,545.3 914.0,626.4 915.5,626.4C917.0,626.4 918.1,545.3 919.6,545.3C921.0,545.3 922.1,626.4 923.6,626.4C925.1,626.4 926.2,545.3 927.7,545.3C929.2,545.3 930.3,626.4 931.7,626.4C933.2,626.4 934.3,545.3 935.8,545.3C937.3,545.3 938.4,626.4 939.9,626.4C941.3,626.4 942.4,545.3 943.9,545.3C945.4,545.3 946.5,626.4 948.0,626.4C949.5,626.4 950.6,545.3 952.0,545.3C953.5,545.3 954.6,626.4 956.1,626.4C957.6,626.4 958.7,545.3 960.2,545.3C961.7,545.3 962.8,618.0 964.3,618.0C965.2,618.0 966.0,551.3 966.9,551.3C967.3,551.3 967.7,618.7 968.1,618.7C968.7,618.7 969.2,498.3 969.8,498.3C970.3,498.3 970.8,688.5 971.3,688.5C972.2,688.5 973.0,467.0 973.9,467.0C974.6,467.0 975.1,698.1 975.8,698.1C976.8,698.1 977.5,467.5 978.5,467.5C979.6,467.5 980.3,697.7 981.4,697.7C982.5,697.7 983.4,471.9 984.5,471.9C986.0,471.9 987.1,686.1 988.6,686.1C990.0,686.1 991.1,471.9 992.5,471.9C994.0,471.9 995.1,683.7 996.6,683.7C998.1,683.7 999.1,486.3 1000.6,486.3C1002.1,486.3 1003.2,672.9 1004.7,672.9C1006.3,672.9 1007.5,504.3 1009.1,504.3C1011.3,504.3 1012.9,645.2 1015.1,645.2C1016.2,645.2 1016.9,540.0 1018.0,540.0C1018.3,540.0 1018.4,546.0 1018.7,546.0C1019.0,546.0 1019.3,532.0 1019.6,532.0C1020.9,532.0 1022.0,609.0 1023.3,609.0C1024.4,609.0 1025.2,572.0 1026.3,572.0C1026.7,572.0 1027.0,579.0 1027.4,579.0C1027.8,579.0 1028.0,571.5 1028.4,571.5C1029.7,571.5 1030.7,603.0 1032.0,603.0C1033.3,603.0 1034.3,555.0 1035.6,555.0C1036.8,555.0 1037.8,598.0 1039.0,598.0C1039.3,598.0 1039.5,592.0 1039.8,592.0C1040.2,592.0 1040.6,617.5 1041.0,617.5C1042.5,617.5 1043.7,558.0 1045.2,558.0C1046.4,558.0 1047.3,590.0 1048.5,590.0C1048.8,590.0 1048.9,586.0 1049.2,586.0C1049.7,586.0 1050.2,612.7 1050.7,612.7C1052.0,612.7 1053.0,558.0 1054.3,558.0C1056.0,558.0 1057.3,607.9 1059.0,607.9C1060.4,607.9 1061.4,557.3 1062.8,557.3C1064.1,557.3 1065.1,627.0 1066.4,627.0C1067.5,627.0 1068.2,540.5 1069.3,540.5C1070.6,540.5 1071.6,645.9 1072.9,645.9C1074.0,645.9 1074.9,545.3 1076.0,545.3C1077.5,545.3 1078.6,644.0 1080.1,644.0C1081.4,644.0 1082.4,541.2 1083.7,541.2C1085.2,541.2 1086.3,637.2 1087.8,637.2C1089.1,637.2 1090.1,538.0 1091.4,538.0C1093.0,538.0 1094.1,638.0 1095.7,638.0C1097.0,638.0 1098.0,539.3 1099.3,539.3C1100.9,539.3 1102.1,636.8 1103.7,636.8C1105.0,636.8 1106.0,538.0 1107.3,538.0C1109.0,538.0 1110.2,639.2 1111.9,639.2C1113.2,639.2 1114.2,537.6 1115.5,537.6C1117.1,537.6 1118.2,636.8 1119.8,636.8C1121.2,636.8 1122.3,536.4 1123.7,536.4C1125.2,536.4 1126.3,637.2 1127.8,637.2C1129.3,637.2 1130.3,534.4 1131.8,534.4C1133.6,534.4 1134.9,638.0 1136.7,638.0C1137.9,638.0 1138.8,532.0 1140.0,532.0C1141.9,532.0 1143.2,635.5 1145.1,635.5C1146.6,635.5 1147.7,536.9 1149.2,536.9C1151.2,536.9 1152.8,626.0 1154.8,626.0C1156.1,626.0 1157.2,547.7 1158.5,547.7C1160.5,547.7 1162.0,616.3 1164.0,616.3C1165.7,616.3 1167.0,555.0 1168.7,555.0C1170.0,555.0 1171.0,624.7 1172.3,624.7C1173.7,624.7 1174.8,539.3 1176.2,539.3C1177.2,539.3 1178.0,647.6 1179.0,647.6C1180.3,647.6 1181.4,538.8 1182.7,538.8C1184.0,538.8 1185.0,621.0 1186.3,621.0C1187.2,621.0 1187.8,520.0 1188.7,520.0C1189.3,520.0 1189.8,626.0 1190.4,626.0C1190.8,626.0 1191.2,502.0 1191.6,502.0C1192.3,502.0 1192.8,689.7 1193.5,689.7C1194.4,689.7 1195.0,467.0 1195.9,467.0C1196.8,467.0 1197.4,698.1 1198.3,698.1C1199.0,698.1 1199.6,469.4 1200.3,469.4C1201.3,469.4 1202.1,697.0 1203.1,697.0C1204.3,697.0 1205.3,469.4 1206.5,469.4C1207.9,469.4 1209.0,691.0 1210.4,691.0C1211.9,691.0 1213.0,468.2 1214.5,468.2C1215.9,468.2 1216.9,688.5 1218.3,688.5C1219.9,688.5 1221.0,480.3 1222.6,480.3C1224.0,480.3 1225.1,683.7 1226.5,683.7C1228.1,683.7 1229.4,495.9 1231.0,495.9C1232.5,495.9 1233.5,620.0 1235.0,620.0C1235.3,620.0 1235.5,616.0 1235.8,616.0C1236.2,616.0 1236.4,627.0 1236.8,627.0C1237.9,627.0 1238.7,555.2 1239.8,555.2C1240.3,555.2 1240.8,569.4 1241.3,569.4C1242.1,569.4 1242.6,544.6 1243.4,544.6C1244.3,544.6 1245.1,605.7 1246.0,605.7C1246.7,605.7 1247.1,569.4 1247.8,569.4C1248.6,569.4 1249.3,620.6 1250.1,620.6C1251.0,620.6 1251.8,548.7 1252.7,548.7C1253.8,548.7 1254.5,570.0 1255.6,570.0C1255.9,570.0 1256.0,568.5 1256.3,568.5C1257.1,568.5 1257.8,626.5 1258.6,626.5C1260.5,626.5 1261.9,534.4 1263.8,534.4C1264.7,534.4 1265.5,607.0 1266.4,607.0C1267.1,607.0 1267.6,578.5 1268.3,578.5C1268.8,578.5 1269.1,590.8 1269.6,590.8C1270.4,590.8 1271.1,549.4 1271.9,549.4C1273.0,549.4 1273.7,625.8 1274.8,625.8C1275.5,625.8 1276.0,587.6 1276.7,587.6C1277.0,587.6 1277.3,594.0 1277.6,594.0C1278.5,594.0 1279.3,541.6 1280.2,541.6C1281.1,541.6 1281.7,622.0 1282.6,622.0C1283.3,622.0 1283.8,575.3 1284.5,575.3C1285.1,575.3 1285.5,592.8 1286.1,592.8C1286.8,592.8 1287.3,540.3 1288.0,540.3C1288.8,540.3 1289.5,626.5 1290.3,626.5C1291.0,626.5 1291.6,573.3 1292.3,573.3C1292.9,573.3 1293.3,594.0 1293.9,594.0C1294.6,594.0 1295.1,541.6 1295.8,541.6C1296.6,541.6 1297.3,627.1 1298.1,627.1C1298.8,627.1 1299.4,567.5 1300.1,567.5C1300.7,567.5 1301.1,596.0 1301.7,596.0C1302.3,596.0 1302.7,541.6 1303.3,541.6C1304.2,541.6 1305.0,629.7 1305.9,629.7C1306.6,629.7 1307.1,562.3 1307.8,562.3C1308.4,562.3 1308.8,596.7 1309.4,596.7C1310.0,596.7 1310.5,543.5 1311.1,543.5C1311.9,543.5 1312.6,630.4 1313.4,630.4C1314.0,630.4 1314.4,559.0 1315.0,559.0C1315.6,559.0 1316.0,598.0 1316.6,598.0C1317.3,598.0 1317.9,546.1 1318.6,546.1C1319.5,546.1 1320.3,627.8 1321.2,627.8C1321.7,627.8 1322.2,556.2 1322.7,556.2C1323.3,556.2 1323.7,601.0 1324.3,601.0C1325.1,601.0 1325.6,549.0 1326.4,549.0C1327.3,549.0 1328.1,623.2 1329.0,623.2C1329.5,623.2 1330.0,559.0 1330.5,559.0C1331.1,559.0 1331.5,599.0 1332.1,599.0C1332.9,599.0 1333.4,553.2 1334.2,553.2C1335.0,553.2 1335.6,620.0 1336.4,620.0C1337.1,620.0 1337.6,559.7 1338.3,559.7C1338.9,559.7 1339.3,599.0 1339.9,599.0C1340.6,599.0 1341.2,556.5 1341.9,556.5C1342.7,556.5 1343.3,616.1 1344.1,616.1C1344.8,616.1 1345.4,563.0 1346.1,563.0C1346.7,563.0 1347.1,595.4 1347.7,595.4C1348.4,595.4 1349.0,561.0 1349.7,561.0C1350.3,561.0 1350.7,610.3 1351.3,610.3C1352.7,610.3 1353.8,577.2 1355.2,577.2C1355.7,577.2 1356.2,594.7 1356.7,594.7C1357.3,594.7 1357.8,566.2 1358.4,566.2C1359.1,566.2 1359.6,603.0 1360.3,603.0C1361.4,603.0 1362.1,499.5 1363.2,499.5C1364.3,499.5 1365.0,694.5 1366.1,694.5C1367.1,694.5 1367.8,498.3 1368.8,498.3C1370.7,498.3 1372.2,664.4 1374.1,664.4C1375.4,664.4 1376.4,509.9 1377.7,509.9C1379.4,509.9 1380.8,653.6 1382.5,653.6C1383.8,653.6 1384.8,513.3 1386.1,513.3C1388.1,513.3 1389.6,651.2 1391.6,651.2" fill="none" stroke="#1a8db6" stroke-width="2.1" opacity="0.28" stroke-linejoin="round"/><path d="M459.0,540.0C459.2,540.0 459.4,521.0 459.6,521.0C460.3,521.0 460.9,648.0 461.6,648.0C462.6,648.0 463.4,520.5 464.4,520.5C465.9,520.5 467.1,649.0 468.6,649.0C470.2,649.0 471.3,520.5 472.9,520.5C474.5,520.5 475.8,649.0 477.4,649.0C479.0,649.0 480.2,520.5 481.8,520.5C483.4,520.5 484.5,648.5 486.1,648.5C487.7,648.5 488.8,527.0 490.4,527.0C491.9,527.0 493.0,644.0 494.5,644.0C495.8,644.0 496.8,551.3 498.1,551.3C499.0,551.3 499.7,589.5 500.6,589.5C501.0,589.5 501.4,581.5 501.8,581.5C502.4,581.5 502.9,584.0 503.5,584.0C504.2,584.0 504.8,582.2 505.5,582.2C506.2,582.2 506.8,583.8 507.5,583.8C508.2,583.8 508.8,582.6 509.5,582.6C510.2,582.6 510.8,584.4 511.5,584.4C512.2,584.4 512.8,583.0 513.5,583.0C514.2,583.0 514.8,585.0 515.5,585.0C516.0,585.0 516.5,582.5 517.0,582.5C517.5,582.5 517.9,588.0 518.4,588.0C518.7,588.0 519.0,574.0 519.3,574.0C519.7,574.0 520.0,598.0 520.4,598.0C520.7,598.0 520.9,568.0 521.2,568.0C521.6,568.0 521.8,559.0 522.2,559.0C522.6,559.0 523.0,634.3 523.4,634.3C524.1,634.3 524.6,503.0 525.3,503.0C526.1,503.0 526.7,674.0 527.5,674.0C528.2,674.0 528.7,483.4 529.4,483.4C530.4,483.4 531.1,694.5 532.1,694.5C533.0,694.5 533.8,469.4 534.7,469.4C535.7,469.4 536.4,698.1 537.4,698.1C538.5,698.1 539.4,470.6 540.5,470.6C541.8,470.6 542.8,694.5 544.1,694.5C545.5,694.5 546.6,471.4 548.0,471.4C549.4,471.4 550.4,686.6 551.8,686.6C553.3,686.6 554.4,482.2 555.9,482.2C557.4,482.2 558.5,682.5 560.0,682.5C561.6,682.5 562.7,494.7 564.3,494.7C566.0,494.7 567.4,642.3 569.1,642.3C569.6,642.3 570.1,645.5 570.6,645.5C571.0,645.5 571.2,640.0 571.6,640.0C573.0,640.0 574.0,527.2 575.4,527.2C577.5,527.2 579.1,638.0 581.2,638.0C582.8,638.0 583.9,541.5 585.5,541.5C586.6,541.5 587.3,588.0 588.4,588.0C588.6,588.0 588.8,581.5 589.0,581.5C589.7,581.5 590.3,622.0 591.0,622.0C592.9,622.0 594.4,543.5 596.3,543.5C597.4,543.5 598.2,588.0 599.2,588.0C599.4,588.0 599.6,581.5 599.8,581.5C600.6,581.5 601.1,622.0 601.8,622.0C603.8,622.0 605.2,543.5 607.2,543.5C608.2,543.5 609.0,588.0 610.1,588.0C610.3,588.0 610.4,581.5 610.7,581.5C611.4,581.5 611.9,627.0 612.7,627.0C614.6,627.0 616.0,543.5 618.0,543.5C619.0,543.5 619.8,588.0 620.9,588.0C621.1,588.0 621.3,581.5 621.5,581.5C622.2,581.5 622.8,627.0 623.5,627.0C625.4,627.0 626.9,541.5 628.8,541.5C629.9,541.5 630.7,588.0 631.7,588.0C631.9,588.0 632.1,581.5 632.3,581.5C633.0,581.5 633.6,627.0 634.3,627.0C636.3,627.0 637.7,541.5 639.6,541.5C640.7,541.5 641.5,588.0 642.5,588.0C642.8,588.0 642.9,581.5 643.1,581.5C643.9,581.5 644.4,627.0 645.1,627.0C647.1,627.0 648.5,541.5 650.5,541.5C651.5,541.5 652.3,588.0 653.4,588.0C653.6,588.0 653.8,581.5 654.0,581.5C654.7,581.5 655.3,627.0 656.0,627.0C657.9,627.0 659.4,541.5 661.3,541.5C662.4,541.5 663.2,588.0 664.2,588.0C664.4,588.0 664.6,581.5 664.8,581.5C665.5,581.5 666.1,627.0 666.8,627.0C668.8,627.0 670.2,541.5 672.1,541.5C673.2,541.5 674.0,588.0 675.0,588.0C675.3,588.0 675.4,581.5 675.6,581.5C676.4,581.5 676.9,627.0 677.6,627.0C679.6,627.0 681.0,541.5 683.0,541.5C684.0,541.5 684.8,588.0 685.9,588.0C686.1,588.0 686.3,581.5 686.5,581.5C687.2,581.5 687.7,627.0 688.5,627.0C690.4,627.0 691.9,541.5 693.8,541.5C694.9,541.5 695.6,588.0 696.7,588.0C696.9,588.0 697.1,581.5 697.3,581.5C698.0,581.5 698.6,627.0 699.3,627.0C701.2,627.0 702.7,541.5 704.6,541.5C705.7,541.5 706.5,588.0 707.5,588.0C707.7,588.0 707.9,581.5 708.1,581.5C708.9,581.5 709.4,627.0 710.1,627.0C712.1,627.0 713.5,541.5 715.5,541.5C716.5,541.5 717.3,588.0 718.4,588.0C718.6,588.0 718.7,581.5 719.0,581.5C719.7,581.5 720.2,627.0 721.0,627.0C722.9,627.0 724.3,541.5 726.3,541.5C727.3,541.5 728.1,588.0 729.2,588.0C729.4,588.0 729.6,581.5 729.8,581.5C730.5,581.5 731.1,627.0 731.8,627.0C733.7,627.0 735.2,541.5 737.1,541.5C738.2,541.5 739.0,588.0 740.0,588.0C740.2,588.0 740.4,581.5 740.6,581.5C741.3,581.5 741.9,612.0 742.6,612.0C743.4,612.0 744.1,541.7 744.9,541.7C745.3,541.7 745.7,640.4 746.1,640.4C746.7,640.4 747.2,494.7 747.8,494.7C748.5,494.7 749.0,683.7 749.7,683.7C750.5,683.7 751.1,467.5 751.9,467.5C752.6,467.5 753.1,697.7 753.8,697.7C754.7,697.7 755.3,469.0 756.2,469.0C757.3,469.0 758.2,697.0 759.3,697.0C760.4,697.0 761.1,472.3 762.2,472.3C763.6,472.3 764.7,683.7 766.1,683.7C767.6,683.7 768.7,476.7 770.2,476.7C771.5,476.7 772.5,682.5 773.8,682.5C775.4,682.5 776.7,493.5 778.3,493.5C779.6,493.5 780.7,671.7 782.0,671.7C783.8,671.7 785.2,519.5 787.0,519.5C789.2,519.5 790.8,639.2 793.0,639.2C794.7,639.2 796.1,523.1 797.8,523.1C799.5,523.1 800.7,639.2 802.4,639.2C803.8,639.2 804.9,547.0 806.3,547.0C807.8,547.0 808.9,616.8 810.4,616.8C811.7,616.8 812.7,557.3 814.0,557.3C815.5,557.3 816.6,612.7 818.1,612.7C819.5,612.7 820.6,555.0 822.1,555.0C823.6,555.0 824.7,615.8 826.2,615.8C827.7,615.8 828.8,551.8 830.2,551.8C831.7,551.8 832.8,620.6 834.3,620.6C835.8,620.6 836.9,549.4 838.4,549.4C839.8,549.4 840.9,621.0 842.4,621.0C843.9,621.0 845.0,549.0 846.5,549.0C848.0,549.0 849.1,622.3 850.5,622.3C852.0,622.3 853.1,547.7 854.6,547.7C856.1,547.7 857.2,623.5 858.7,623.5C860.1,623.5 861.2,547.0 862.7,547.0C864.2,547.0 865.3,624.7 866.8,624.7C868.3,624.7 869.4,546.5 870.8,546.5C872.3,546.5 873.4,624.7 874.9,624.7C876.4,624.7 877.5,545.3 879.0,545.3C880.4,545.3 881.5,625.4 883.0,625.4C884.5,625.4 885.6,545.3 887.1,545.3C888.6,545.3 889.7,626.4 891.1,626.4C892.6,626.4 893.7,545.3 895.2,545.3C896.7,545.3 897.8,626.4 899.3,626.4C900.7,626.4 901.8,545.3 903.3,545.3C904.8,545.3 905.9,626.4 907.4,626.4C908.9,626.4 910.0,545.3 911.4,545.3C912.9,545.3 914.0,626.4 915.5,626.4C917.0,626.4 918.1,545.3 919.6,545.3C921.0,545.3 922.1,626.4 923.6,626.4C925.1,626.4 926.2,545.3 927.7,545.3C929.2,545.3 930.3,626.4 931.7,626.4C933.2,626.4 934.3,545.3 935.8,545.3C937.3,545.3 938.4,626.4 939.9,626.4C941.3,626.4 942.4,545.3 943.9,545.3C945.4,545.3 946.5,626.4 948.0,626.4C949.5,626.4 950.6,545.3 952.0,545.3C953.5,545.3 954.6,626.4 956.1,626.4C957.6,626.4 958.7,545.3 960.2,545.3C961.7,545.3 962.8,618.0 964.3,618.0C965.2,618.0 966.0,551.3 966.9,551.3C967.3,551.3 967.7,618.7 968.1,618.7C968.7,618.7 969.2,498.3 969.8,498.3C970.3,498.3 970.8,688.5 971.3,688.5C972.2,688.5 973.0,467.0 973.9,467.0C974.6,467.0 975.1,698.1 975.8,698.1C976.8,698.1 977.5,467.5 978.5,467.5C979.6,467.5 980.3,697.7 981.4,697.7C982.5,697.7 983.4,471.9 984.5,471.9C986.0,471.9 987.1,686.1 988.6,686.1C990.0,686.1 991.1,471.9 992.5,471.9C994.0,471.9 995.1,683.7 996.6,683.7C998.1,683.7 999.1,486.3 1000.6,486.3C1002.1,486.3 1003.2,672.9 1004.7,672.9C1006.3,672.9 1007.5,504.3 1009.1,504.3C1011.3,504.3 1012.9,645.2 1015.1,645.2C1016.2,645.2 1016.9,540.0 1018.0,540.0C1018.3,540.0 1018.4,546.0 1018.7,546.0C1019.0,546.0 1019.3,532.0 1019.6,532.0C1020.9,532.0 1022.0,609.0 1023.3,609.0C1024.4,609.0 1025.2,572.0 1026.3,572.0C1026.7,572.0 1027.0,579.0 1027.4,579.0C1027.8,579.0 1028.0,571.5 1028.4,571.5C1029.7,571.5 1030.7,603.0 1032.0,603.0C1033.3,603.0 1034.3,555.0 1035.6,555.0C1036.8,555.0 1037.8,598.0 1039.0,598.0C1039.3,598.0 1039.5,592.0 1039.8,592.0C1040.2,592.0 1040.6,617.5 1041.0,617.5C1042.5,617.5 1043.7,558.0 1045.2,558.0C1046.4,558.0 1047.3,590.0 1048.5,590.0C1048.8,590.0 1048.9,586.0 1049.2,586.0C1049.7,586.0 1050.2,612.7 1050.7,612.7C1052.0,612.7 1053.0,558.0 1054.3,558.0C1056.0,558.0 1057.3,607.9 1059.0,607.9C1060.4,607.9 1061.4,557.3 1062.8,557.3C1064.1,557.3 1065.1,627.0 1066.4,627.0C1067.5,627.0 1068.2,540.5 1069.3,540.5C1070.6,540.5 1071.6,645.9 1072.9,645.9C1074.0,645.9 1074.9,545.3 1076.0,545.3C1077.5,545.3 1078.6,644.0 1080.1,644.0C1081.4,644.0 1082.4,541.2 1083.7,541.2C1085.2,541.2 1086.3,637.2 1087.8,637.2C1089.1,637.2 1090.1,538.0 1091.4,538.0C1093.0,538.0 1094.1,638.0 1095.7,638.0C1097.0,638.0 1098.0,539.3 1099.3,539.3C1100.9,539.3 1102.1,636.8 1103.7,636.8C1105.0,636.8 1106.0,538.0 1107.3,538.0C1109.0,538.0 1110.2,639.2 1111.9,639.2C1113.2,639.2 1114.2,537.6 1115.5,537.6C1117.1,537.6 1118.2,636.8 1119.8,636.8C1121.2,636.8 1122.3,536.4 1123.7,536.4C1125.2,536.4 1126.3,637.2 1127.8,637.2C1129.3,637.2 1130.3,534.4 1131.8,534.4C1133.6,534.4 1134.9,638.0 1136.7,638.0C1137.9,638.0 1138.8,532.0 1140.0,532.0C1141.9,532.0 1143.2,635.5 1145.1,635.5C1146.6,635.5 1147.7,536.9 1149.2,536.9C1151.2,536.9 1152.8,626.0 1154.8,626.0C1156.1,626.0 1157.2,547.7 1158.5,547.7C1160.5,547.7 1162.0,616.3 1164.0,616.3C1165.7,616.3 1167.0,555.0 1168.7,555.0C1170.0,555.0 1171.0,624.7 1172.3,624.7C1173.7,624.7 1174.8,539.3 1176.2,539.3C1177.2,539.3 1178.0,647.6 1179.0,647.6C1180.3,647.6 1181.4,538.8 1182.7,538.8C1184.0,538.8 1185.0,621.0 1186.3,621.0C1187.2,621.0 1187.8,520.0 1188.7,520.0C1189.3,520.0 1189.8,626.0 1190.4,626.0C1190.8,626.0 1191.2,502.0 1191.6,502.0C1192.3,502.0 1192.8,689.7 1193.5,689.7C1194.4,689.7 1195.0,467.0 1195.9,467.0C1196.8,467.0 1197.4,698.1 1198.3,698.1C1199.0,698.1 1199.6,469.4 1200.3,469.4C1201.3,469.4 1202.1,697.0 1203.1,697.0C1204.3,697.0 1205.3,469.4 1206.5,469.4C1207.9,469.4 1209.0,691.0 1210.4,691.0C1211.9,691.0 1213.0,468.2 1214.5,468.2C1215.9,468.2 1216.9,688.5 1218.3,688.5C1219.9,688.5 1221.0,480.3 1222.6,480.3C1224.0,480.3 1225.1,683.7 1226.5,683.7C1228.1,683.7 1229.4,495.9 1231.0,495.9C1232.5,495.9 1233.5,620.0 1235.0,620.0C1235.3,620.0 1235.5,616.0 1235.8,616.0C1236.2,616.0 1236.4,627.0 1236.8,627.0C1237.9,627.0 1238.7,555.2 1239.8,555.2C1240.3,555.2 1240.8,569.4 1241.3,569.4C1242.1,569.4 1242.6,544.6 1243.4,544.6C1244.3,544.6 1245.1,605.7 1246.0,605.7C1246.7,605.7 1247.1,569.4 1247.8,569.4C1248.6,569.4 1249.3,620.6 1250.1,620.6C1251.0,620.6 1251.8,548.7 1252.7,548.7C1253.8,548.7 1254.5,570.0 1255.6,570.0C1255.9,570.0 1256.0,568.5 1256.3,568.5C1257.1,568.5 1257.8,626.5 1258.6,626.5C1260.5,626.5 1261.9,534.4 1263.8,534.4C1264.7,534.4 1265.5,607.0 1266.4,607.0C1267.1,607.0 1267.6,578.5 1268.3,578.5C1268.8,578.5 1269.1,590.8 1269.6,590.8C1270.4,590.8 1271.1,549.4 1271.9,549.4C1273.0,549.4 1273.7,625.8 1274.8,625.8C1275.5,625.8 1276.0,587.6 1276.7,587.6C1277.0,587.6 1277.3,594.0 1277.6,594.0C1278.5,594.0 1279.3,541.6 1280.2,541.6C1281.1,541.6 1281.7,622.0 1282.6,622.0C1283.3,622.0 1283.8,575.3 1284.5,575.3C1285.1,575.3 1285.5,592.8 1286.1,592.8C1286.8,592.8 1287.3,540.3 1288.0,540.3C1288.8,540.3 1289.5,626.5 1290.3,626.5C1291.0,626.5 1291.6,573.3 1292.3,573.3C1292.9,573.3 1293.3,594.0 1293.9,594.0C1294.6,594.0 1295.1,541.6 1295.8,541.6C1296.6,541.6 1297.3,627.1 1298.1,627.1C1298.8,627.1 1299.4,567.5 1300.1,567.5C1300.7,567.5 1301.1,596.0 1301.7,596.0C1302.3,596.0 1302.7,541.6 1303.3,541.6C1304.2,541.6 1305.0,629.7 1305.9,629.7C1306.6,629.7 1307.1,562.3 1307.8,562.3C1308.4,562.3 1308.8,596.7 1309.4,596.7C1310.0,596.7 1310.5,543.5 1311.1,543.5C1311.9,543.5 1312.6,630.4 1313.4,630.4C1314.0,630.4 1314.4,559.0 1315.0,559.0C1315.6,559.0 1316.0,598.0 1316.6,598.0C1317.3,598.0 1317.9,546.1 1318.6,546.1C1319.5,546.1 1320.3,627.8 1321.2,627.8C1321.7,627.8 1322.2,556.2 1322.7,556.2C1323.3,556.2 1323.7,601.0 1324.3,601.0C1325.1,601.0 1325.6,549.0 1326.4,549.0C1327.3,549.0 1328.1,623.2 1329.0,623.2C1329.5,623.2 1330.0,559.0 1330.5,559.0C1331.1,559.0 1331.5,599.0 1332.1,599.0C1332.9,599.0 1333.4,553.2 1334.2,553.2C1335.0,553.2 1335.6,620.0 1336.4,620.0C1337.1,620.0 1337.6,559.7 1338.3,559.7C1338.9,559.7 1339.3,599.0 1339.9,599.0C1340.6,599.0 1341.2,556.5 1341.9,556.5C1342.7,556.5 1343.3,616.1 1344.1,616.1C1344.8,616.1 1345.4,563.0 1346.1,563.0C1346.7,563.0 1347.1,595.4 1347.7,595.4C1348.4,595.4 1349.0,561.0 1349.7,561.0C1350.3,561.0 1350.7,610.3 1351.3,610.3C1352.7,610.3 1353.8,577.2 1355.2,577.2C1355.7,577.2 1356.2,594.7 1356.7,594.7C1357.3,594.7 1357.8,566.2 1358.4,566.2C1359.1,566.2 1359.6,603.0 1360.3,603.0C1361.4,603.0 1362.1,499.5 1363.2,499.5C1364.3,499.5 1365.0,694.5 1366.1,694.5C1367.1,694.5 1367.8,498.3 1368.8,498.3C1370.7,498.3 1372.2,664.4 1374.1,664.4C1375.4,664.4 1376.4,509.9 1377.7,509.9C1379.4,509.9 1380.8,653.6 1382.5,653.6C1383.8,653.6 1384.8,513.3 1386.1,513.3C1388.1,513.3 1389.6,651.2 1391.6,651.2" fill="none" stroke="#22a8d8" stroke-width="1.3" stroke-linejoin="round"/></g>
<defs>
<radialGradient id="thumb" cx="0.5" cy="0.35" r="0.7"><stop offset="0" stop-color="#ffffff"/><stop offset="0.55" stop-color="#e4e7ea"/><stop offset="1" stop-color="#a9b0b7"/></radialGradient>
<linearGradient id="sfill" x1="0" y1="0" x2="1" y2="0"><stop offset="0" stop-color="#14b2e3"/><stop offset="1" stop-color="#0e8fbb"/></linearGradient>
<linearGradient id="sfill2" x1="0" y1="0" x2="1" y2="0"><stop offset="0" stop-color="#0e8fbb"/><stop offset="1" stop-color="#14b2e3"/></linearGradient>
<linearGradient id="skA" x1="0" y1="0" x2="0" y2="1"><stop offset="0" stop-color="#29333d"/><stop offset="1" stop-color="#35424e"/></linearGradient>
<linearGradient id="skB" x1="0" y1="0" x2="0" y2="1"><stop offset="0" stop-color="#2f3b46"/><stop offset="1" stop-color="#3c4a57"/></linearGradient>
<radialGradient id="sk" cx="0.5" cy="0.45" r="0.6"><stop offset="0" stop-color="#3a4753"/><stop offset="1" stop-color="#33404b"/></radialGradient>
</defs>
<circle cx="579" cy="775.3" r="9.4" fill="none" stroke="#1eaedb" stroke-width="1.6"/>
<rect x="576.9" y="771.0" width="4.2" height="8.6" rx="2.1" fill="#1eaedb"/>
<rect x="640.2" y="843.1" width="37.09999999999991" height="13.200000000000001" fill="url(#sfill)"/>
<circle cx="677.3" cy="850.9000000000001" r="10.4" fill="#000" opacity="0.45" filter="url(#glow)"/>
<circle cx="677.3" cy="849.7" r="10" fill="url(#thumb)"/><circle cx="677.3" cy="849.7" r="2.6" fill="#1593c0"/>
<circle cx="802.3" cy="822.2" r="46" fill="#11161d" stroke="#222b35" stroke-width="1"/>
<circle cx="802.3" cy="824.2" r="38" fill="#000" opacity="0.5" filter="url(#glow)"/>
<circle cx="802.3" cy="822.2" r="37.6" fill="url(#skA)"/><circle cx="802.3" cy="822.2" r="31.8" fill="url(#skB)" stroke="#414e5a" stroke-width="0.8"/>
<path d="M772.29,854.38 A44,44 0 0 1 774.91,787.77" fill="none" stroke="#21b7e6" stroke-width="6.5" stroke-linecap="round" opacity="0.55" filter="url(#glow)"/>
<path d="M772.29,854.38 A44,44 0 0 1 774.91,787.77" fill="none" stroke="#1fb2e0" stroke-width="3.6" stroke-linecap="round"/>
<clipPath id="vm880"><rect x="880.2" y="768.3" width="16.3" height="83.30000000000007" rx="8.1"/></clipPath><rect x="880.2" y="844.4" width="16.3" height="7.2000000000000455" fill="#1eaedb" clip-path="url(#vm880)"/>
<circle cx="1092.1" cy="775.5" r="9.4" fill="none" stroke="#1eaedb" stroke-width="1.6"/>
<rect x="1090.0" y="771.2" width="4.2" height="8.6" rx="2.1" fill="#1eaedb"/>
<rect x="1107.7" y="842.4" width="41.200000000000045" height="13.200000000000001" fill="url(#sfill2)"/>
<circle cx="1107.7" cy="850.2" r="10.4" fill="#000" opacity="0.45" filter="url(#glow)"/>
<circle cx="1107.7" cy="849" r="10" fill="url(#thumb)"/><circle cx="1107.7" cy="849" r="2.6" fill="#1593c0"/>
<clipPath id="vm1276"><rect x="1276.1" y="768.3" width="16.3" height="82.5" rx="8.1"/></clipPath><rect x="1276.1" y="768.3" width="16.3" height="3.1000000000000227" fill="#1eaedb" clip-path="url(#vm1276)"/>
<rect x="1433" y="268.1" width="13" height="1.4" fill="#5c6873"/>
<rect x="1477" y="268.1" width="13" height="1.4" fill="#5c6873"/>
<rect x="1581.4" y="268.1" width="13.0" height="1.4" fill="#5c6873"/>
<rect x="1625.2" y="268.1" width="12.799999999999955" height="1.4" fill="#5c6873"/>
<path d="M1453.6,264.8 H1469.7 L1461.65,273.1 Z" fill="#5c6873"/>
<path d="M1601.7,273 H1617.8 L1609.75,264.7 Z" fill="#5c6873"/>
<rect x="1515.2" y="256.4" width="42" height="26" rx="13" fill="none" stroke="#8a95a0" stroke-width="1.2"/>
<rect x="1442" y="335.3" width="18.3" height="341.4" fill="#2b3640" opacity="0.75"/>
<rect x="1442" y="348.6" width="18.3" height="1" fill="#242e37"/>
<rect x="1442" y="407.5" width="18.3" height="29.0" fill="#46535e"/>
<rect x="1442" y="407.5" width="18.3" height="2.2" fill="#55626d"/>
<rect x="1442" y="436.5" width="18.3" height="240.20000000000005" fill="#76848f"/>
<rect x="1441.4" y="373.5" width="19.5" height="8" rx="1" fill="#0e1218"/>
<rect x="1442.4" y="374.3" width="17.5" height="6.2" fill="#8b98a3"/>
<rect x="1462.7" y="335.3" width="18.3" height="341.4" fill="#2b3640" opacity="0.75"/>
<rect x="1462.7" y="348.6" width="18.3" height="1" fill="#242e37"/>
<rect x="1462.7" y="405.3" width="18.3" height="35.19999999999999" fill="#46535e"/>
<rect x="1462.7" y="405.3" width="18.3" height="2.2" fill="#55626d"/>
<rect x="1462.7" y="440.5" width="18.3" height="236.20000000000005" fill="#76848f"/>
<rect x="1462.1000000000001" y="372.2" width="19.5" height="8" rx="1" fill="#0e1218"/>
<rect x="1463.1000000000001" y="373" width="17.5" height="6.2" fill="#8b98a3"/>
<rect x="1590.5" y="335.3" width="18.3" height="341.4" fill="#2b3640" opacity="0.75"/>
<rect x="1590.5" y="348.6" width="18.3" height="1" fill="#242e37"/>
<rect x="1590.5" y="377.8" width="18.3" height="16.19999999999999" fill="#46535e"/>
<rect x="1590.5" y="377.8" width="18.3" height="2.2" fill="#55626d"/>
<rect x="1590.5" y="394" width="18.3" height="282.70000000000005" fill="#76848f"/>
<rect x="1589.9" y="347.8" width="19.5" height="8" rx="1" fill="#0e1218"/>
<rect x="1590.9" y="348.6" width="17.5" height="6.2" fill="#8b98a3"/>
<rect x="1610.8" y="335.3" width="18.3" height="341.4" fill="#2b3640" opacity="0.75"/>
<rect x="1610.8" y="348.6" width="18.3" height="1" fill="#242e37"/>
<rect x="1610.8" y="377.8" width="18.3" height="18.80000000000001" fill="#46535e"/>
<rect x="1610.8" y="377.8" width="18.3" height="2.2" fill="#55626d"/>
<rect x="1610.8" y="396.6" width="18.3" height="280.1" fill="#76848f"/>
<rect x="1610.2" y="347.8" width="19.5" height="8" rx="1" fill="#0e1218"/>
<rect x="1611.2" y="348.6" width="17.5" height="6.2" fill="#8b98a3"/>
<rect x="1460.3" y="380" width="2.4" height="296.7" fill="#10151c"/><rect x="1608.8" y="355" width="2" height="321.7" fill="#10151c"/>
<rect x="1417.6000000000001" y="459.2" width="12" height="3" rx="1.5" fill="#fff"/>
<rect x="1493.4" y="459.2" width="12" height="3" rx="1.5" fill="#fff"/>
<rect x="1565.7" y="459.2" width="12" height="3" rx="1.5" fill="#fff"/>
<rect x="1641.8000000000002" y="459.2" width="12" height="3" rx="1.5" fill="#fff"/>
<g fill="none" stroke="#c9cfd5" stroke-width="1.5" stroke-linecap="round"><path d="M1458.9,714.0 H1454.6000000000001 A5.6,5.6 0 0 0 1454.6000000000001,725.2 H1458.9"/><path d="M1463.9,714.0 H1468.2 A5.6,5.6 0 0 1 1468.2,725.2 H1463.9"/><path d="M1456.8000000000002,719.6 H1466.0" stroke-width="2"/></g>
<g fill="none" stroke="#c9cfd5" stroke-width="1.5" stroke-linecap="round"><path d="M1607.2,714.0 H1602.9 A5.6,5.6 0 0 0 1602.9,725.2 H1607.2"/><path d="M1612.2,714.0 H1616.5 A5.6,5.6 0 0 1 1616.5,725.2 H1612.2"/><path d="M1605.1000000000001,719.6 H1614.3" stroke-width="2"/></g>
<path d="M1516,719.3 H1528" stroke="#e8ebee" stroke-width="1.4"/><path d="M1542.4,719.3 H1556 M1549.2,712.5 V726.1" stroke="#e8ebee" stroke-width="1.4"/>
<circle cx="1440.6" cy="808" r="8.5" fill="none" stroke="#e3e6e9" stroke-width="1.4"/><circle cx="1448.9" cy="808" r="8.5" fill="none" stroke="#e3e6e9" stroke-width="1.4"/>
<path d="M1494,808.5 H1512" stroke="#f2f3f4" stroke-width="1.8"/><path d="M1490,808.5 L1496.8,804 V813 Z M1516.2,808.5 L1509.4,804 V813 Z" fill="#f2f3f4"/>
<circle cx="1561.1" cy="806.6" r="9.2" fill="none" stroke="#7d8892" stroke-width="1.3"/>
<rect x="1559.1" y="802.4" width="4" height="8.4" rx="2.0" fill="#7d8892"/>
<circle cx="1437.5" cy="854.4" r="9.2" fill="none" stroke="#f0f2f4" stroke-width="1.4"/>
<rect x="1435.5" y="850.1999999999999" width="4" height="8.4" rx="2.0" fill="#f0f2f4"/>
<circle cx="1561.1" cy="854.4" r="9.2" fill="none" stroke="#f0f2f4" stroke-width="1.4"/>
<rect x="1559.1" y="850.1999999999999" width="4" height="8.4" rx="2.0" fill="#f0f2f4"/>
<g stroke="#c9cdd1" stroke-width="1.1" stroke-linecap="round"><path d="M1674.6,891.6 L1684.4,882.2"/><path d="M1678.6,891.8 L1684.8,886"/><path d="M1682.4,891.8 L1684.4,890"/></g>
</svg>
<div class="t" style="left:473.5px;top:214.6px;font-size:15.3px;color:#fff;font-weight:400;transform:translate(-50%,-50%);">Full Mix</div>
<div class="t" style="left:1148px;top:215px;font-size:15.3px;color:#fff;font-weight:400;transform:translate(0,-50%);">Presets</div>
<div class="t" style="left:331.0px;top:271px;font-size:14.15px;color:#b4bdc6;font-weight:400;transform:translate(-50%,-50%);">Unlimiter</div>
<div class="t" style="left:516.6px;top:271px;font-size:14.15px;color:#fff;font-weight:400;transform:translate(-50%,-50%);">Bass Control</div>
<div class="t" style="left:702.2px;top:271px;font-size:14.15px;color:#b4bdc6;font-weight:400;transform:translate(-50%,-50%);">Stem EQ</div>
<div class="t" style="left:887.8px;top:271px;font-size:14.15px;color:#b4bdc6;font-weight:400;transform:translate(-50%,-50%);">Clarity</div>
<div class="t" style="left:1073.4px;top:271px;font-size:14.15px;color:#b4bdc6;font-weight:400;transform:translate(-50%,-50%);">Imager</div>
<div class="t" style="left:1259.0px;top:271px;font-size:14.15px;color:#b4bdc6;font-weight:400;transform:translate(-50%,-50%);">Maximizer</div>
<div class="t" style="left:282.2px;top:395.8px;font-size:15.2px;color:#fff;font-weight:400;transform:translate(0,-50%);">Delta</div>
<div class="t" style="left:319px;top:445.2px;font-size:15.6px;color:#fff;font-weight:700;transform:translate(0,-50%);">Balance</div>
<div class="t" style="left:245.6px;top:499.2px;font-size:14.2px;color:#fff;font-weight:400;transform:translate(0,-50%);">Light</div>
<div class="t" style="left:455.4px;top:499.2px;font-size:14.2px;color:#fff;font-weight:400;transform:translate(-100%,-50%);">Heavy</div>
<div class="t" style="left:348.3px;top:562.2px;font-size:15.4px;color:#fff;font-weight:400;transform:translate(-50%,-50%);">-2.8 dB</div>
<div class="t" style="left:325.3px;top:682.2px;font-size:15.6px;color:#fff;font-weight:700;transform:translate(0,-50%);">Punch</div>
<div class="t" style="left:348.5px;top:801.8000000000001px;font-size:15.4px;color:#fff;font-weight:400;transform:translate(-50%,-50%);">+4.8 dB</div>
<div class="t" style="left:1007.6px;top:396.2px;font-size:15.2px;color:#fff;font-weight:400;transform:translate(0,-50%);">Cutoff Frequency:</div>
<div class="t" style="left:1169.4px;top:394.8px;font-size:15px;color:#fff;font-weight:400;transform:translate(-50%,-50%);">120 Hz</div>
<div class="t" style="left:1228.5px;top:396.2px;font-size:15.3px;color:#fff;font-weight:400;transform:translate(0,-50%);">Zoom:</div>
<div class="t" style="left:1310.6px;top:394.8px;font-size:15px;color:#fff;font-weight:400;transform:translate(-50%,-50%);">250 %</div>
<div class="t" style="left:596.8px;top:775px;font-size:15.6px;color:#fff;font-weight:700;transform:translate(0,-50%);">Sustain Power</div>
<div class="t" style="left:550px;top:810.6px;font-size:15.2px;color:#fff;font-weight:400;transform:translate(0,-50%);">Threshold</div>
<div class="t" style="left:684px;top:809.6px;font-size:15px;color:#fff;font-weight:400;transform:translate(-50%,-50%);">-17.5 dB</div>
<div class="t" style="left:543.6px;top:873.4px;font-size:15.2px;color:#fff;font-weight:400;transform:translate(0,-50%);">Dirty</div>
<div class="t" style="left:735.6px;top:873.4px;font-size:15.2px;color:#fff;font-weight:400;transform:translate(-100%,-50%);">Clean</div>
<div class="t" style="left:802.0px;top:822.5px;font-size:15.4px;color:#fff;font-weight:400;transform:translate(-50%,-50%);">35%</div>
<div class="t" style="left:889px;top:874.6px;font-size:14px;color:#fff;font-weight:400;transform:translate(-50%,-50%);">+0.7 dB</div>
<div class="t" style="left:1111.1px;top:775.3px;font-size:15.6px;color:#fff;font-weight:700;transform:translate(0,-50%);">Peak Control</div>
<div class="t" style="left:1057.6px;top:811.4px;font-size:15.2px;color:#fff;font-weight:400;transform:translate(0,-50%);">Threshold</div>
<div class="t" style="left:1192px;top:810.9px;font-size:15px;color:#fff;font-weight:400;transform:translate(-50%,-50%);">-11.0 dB</div>
<div class="t" style="left:1054.3px;top:873.4px;font-size:15.2px;color:#fff;font-weight:400;transform:translate(0,-50%);">Dirty</div>
<div class="t" style="left:1243.3px;top:873.4px;font-size:15.2px;color:#fff;font-weight:400;transform:translate(-100%,-50%);">Clean</div>
<div class="t" style="left:1286.4px;top:874.6px;font-size:14px;color:#fff;font-weight:400;transform:translate(-50%,-50%);">-0.3 dB</div>
<div class="t" style="left:1536.5px;top:269.6px;font-size:12.6px;color:#a9b3bc;font-weight:400;transform:translate(-50%,-50%);letter-spacing:0.3px;">I / O</div>
<div class="t" style="left:1437.7px;top:295.8px;font-size:14px;color:#fff;font-weight:400;transform:translate(-50%,-50%);letter-spacing:0.8px;">−3.3</div>
<div class="t" style="left:1482.8000000000002px;top:295.8px;font-size:14px;color:#fff;font-weight:400;transform:translate(-50%,-50%);letter-spacing:0.8px;">−3.5</div>
<div class="t" style="left:1585.6000000000001px;top:295.8px;font-size:14px;color:#fff;font-weight:400;transform:translate(-50%,-50%);letter-spacing:0.8px;">−0.1</div>
<div class="t" style="left:1630.8000000000002px;top:295.8px;font-size:14px;color:#fff;font-weight:400;transform:translate(-50%,-50%);letter-spacing:0.8px;">−0.1</div>
<div class="t" style="left:1535.8px;top:295.8px;font-size:14px;color:#fff;font-weight:400;transform:translate(-50%,-50%);">Peak</div>
<div class="t" style="left:1438.2px;top:321.3px;font-size:14px;color:#74818c;font-weight:400;transform:translate(-50%,-50%);letter-spacing:0.8px;">−11.2</div>
<div class="t" style="left:1483.6000000000001px;top:321.3px;font-size:14px;color:#74818c;font-weight:400;transform:translate(-50%,-50%);letter-spacing:0.8px;">−11.6</div>
<div class="t" style="left:1585.6000000000001px;top:321.3px;font-size:14px;color:#74818c;font-weight:400;transform:translate(-50%,-50%);letter-spacing:0.8px;">−4.7</div>
<div class="t" style="left:1630.8000000000002px;top:321.3px;font-size:14px;color:#74818c;font-weight:400;transform:translate(-50%,-50%);letter-spacing:0.8px;">−5.1</div>
<div class="t" style="left:1536.5px;top:321.3px;font-size:14px;color:#74818c;font-weight:400;transform:translate(-50%,-50%);">RMS</div>
<div class="t" style="left:1535px;top:351px;font-size:13.2px;color:#6d7a85;font-weight:400;transform:translate(-50%,-50%);letter-spacing:0.7px;">0</div>
<div class="t" style="left:1535px;top:371.6px;font-size:13.2px;color:#6d7a85;font-weight:400;transform:translate(-50%,-50%);letter-spacing:0.7px;">−3</div>
<div class="t" style="left:1535px;top:393.6px;font-size:13.2px;color:#6d7a85;font-weight:400;transform:translate(-50%,-50%);letter-spacing:0.7px;">−6</div>
<div class="t" style="left:1535px;top:420.7px;font-size:13.2px;color:#6d7a85;font-weight:400;transform:translate(-50%,-50%);letter-spacing:0.7px;">−10</div>
<div class="t" style="left:1535px;top:455.1px;font-size:13.2px;color:#6d7a85;font-weight:400;transform:translate(-50%,-50%);letter-spacing:0.7px;">−15</div>
<div class="t" style="left:1535px;top:490.3px;font-size:13.2px;color:#6d7a85;font-weight:400;transform:translate(-50%,-50%);letter-spacing:0.7px;">−20</div>
<div class="t" style="left:1535px;top:554.2px;font-size:13.2px;color:#6d7a85;font-weight:400;transform:translate(-50%,-50%);letter-spacing:0.7px;">−30</div>
<div class="t" style="left:1535px;top:610px;font-size:13.2px;color:#6d7a85;font-weight:400;transform:translate(-50%,-50%);letter-spacing:0.7px;">−40</div>
<div class="t" style="left:1535px;top:647px;font-size:13.2px;color:#6d7a85;font-weight:400;transform:translate(-50%,-50%);letter-spacing:0.7px;">−50</div>
<div class="t" style="left:1535px;top:676.7px;font-size:13.2px;color:#6d7a85;font-weight:400;transform:translate(-50%,-50%);letter-spacing:0.7px;">−Inf</div>
<div class="t" style="left:1439.2px;top:698px;font-size:14px;color:#b9c2ca;font-weight:400;transform:translate(-50%,-50%);letter-spacing:0.8px;">0.0</div>
<div class="t" style="left:1484.5px;top:698px;font-size:14px;color:#b9c2ca;font-weight:400;transform:translate(-50%,-50%);letter-spacing:0.8px;">0.0</div>
<div class="t" style="left:1587.8px;top:698px;font-size:14px;color:#b9c2ca;font-weight:400;transform:translate(-50%,-50%);letter-spacing:0.8px;">0.0</div>
<div class="t" style="left:1632.5px;top:698px;font-size:14px;color:#b9c2ca;font-weight:400;transform:translate(-50%,-50%);letter-spacing:0.8px;">0.0</div>
<div class="t" style="left:1475.6px;top:761.4px;font-size:13.8px;color:#e8ebee;font-weight:400;transform:translate(-50%,-50%);">Bypass</div>
<div class="t" style="left:1594px;top:761.4px;font-size:13.8px;color:#e8ebee;font-weight:400;transform:translate(-50%,-50%);">Gain Match</div>
<div class="t" style="left:1618px;top:806.8px;font-size:12.6px;color:#e8ebee;font-weight:400;transform:translate(-50%,-50%);">Reference</div>
<div class="t" style="left:1490.5px;top:854.5px;font-size:12.6px;color:#e8ebee;font-weight:400;transform:translate(-50%,-50%);">Codec</div>
<div class="t" style="left:1616.8px;top:854.5px;font-size:12.6px;color:#e8ebee;font-weight:400;transform:translate(-50%,-50%);">Dither</div>
</body></html>
